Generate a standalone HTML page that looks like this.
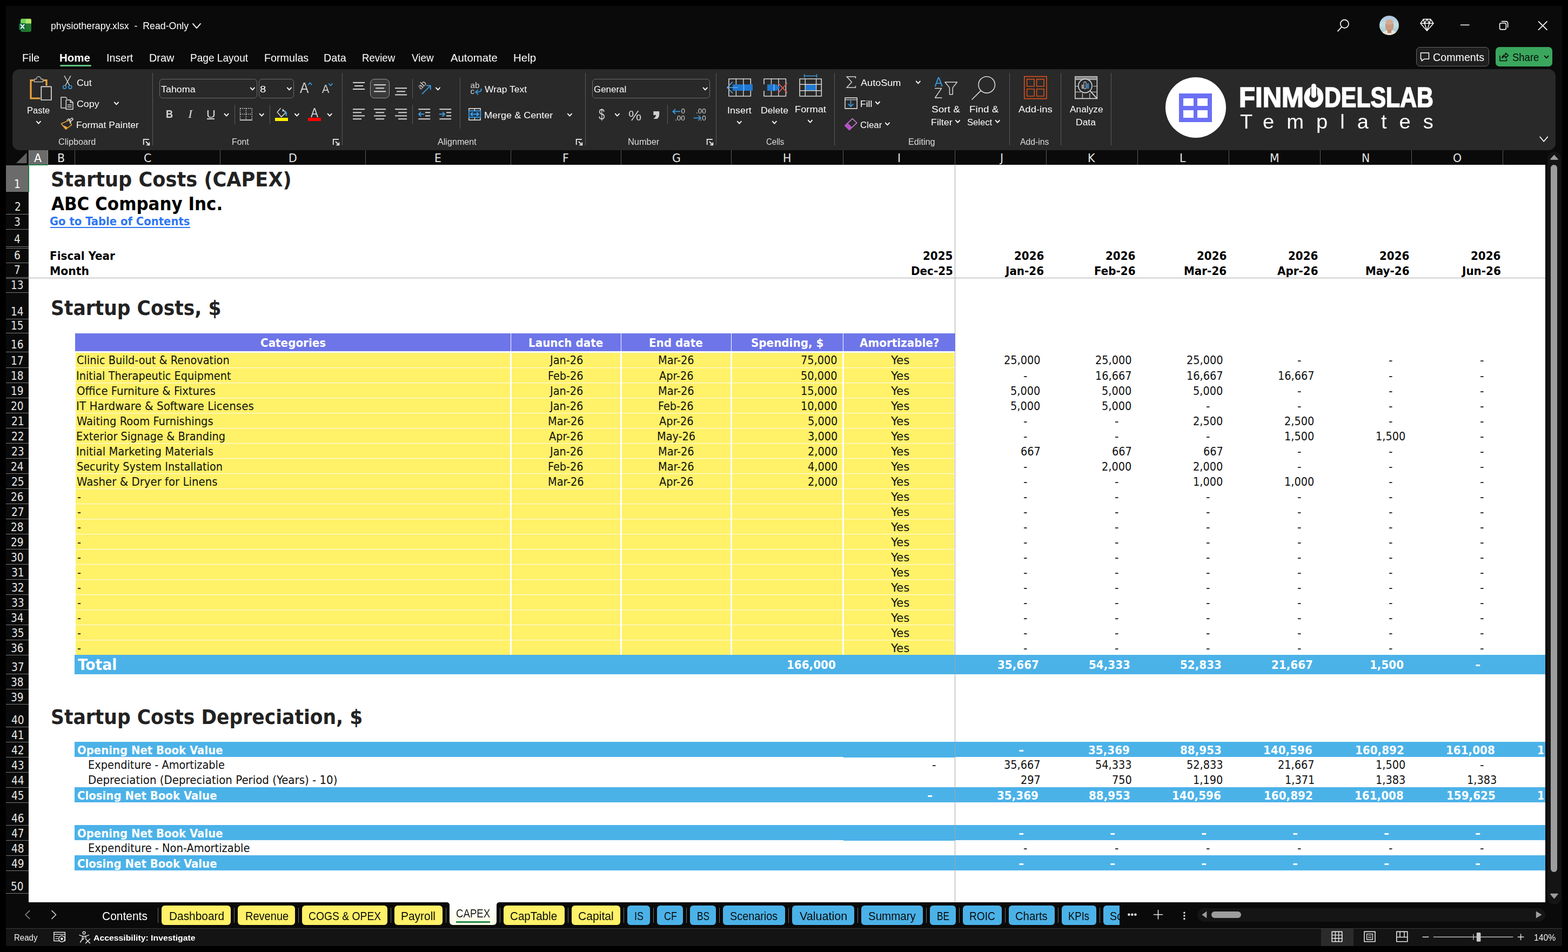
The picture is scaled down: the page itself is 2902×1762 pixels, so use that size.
<!DOCTYPE html>
<html lang="en"><head><meta charset="utf-8"><title>physiotherapy.xlsx - Excel</title>
<style>
html,body{margin:0;padding:0;background:#000;}
body{width:2902px;height:1762px;position:relative;overflow:hidden;font-family:"Liberation Sans",sans-serif;}
#win{position:absolute;left:11px;top:11px;width:2880px;height:1740px;background:#0a0a0a;}
i,span,svg,b{position:absolute;display:block;}
b{font-weight:400;}
#chrome{position:absolute;left:0;top:0;width:2902px;height:1762px;will-change:transform;}
span{white-space:pre;transform-origin:0 0;color:#fff;}
.u{font-family:"Liberation Sans",sans-serif;}
.ub{font-family:"Liberation Sans",sans-serif;font-weight:700;}
.ui{font-family:"Liberation Serif",serif;font-style:italic;}
.h{font-family:"DejaVu Sans Condensed","DejaVu Sans",sans-serif;}
.hb{font-family:"DejaVu Sans Condensed","DejaVu Sans",sans-serif;font-weight:700;}
.dv{font-family:"DejaVu Sans",sans-serif;}
</style></head><body>
<div id="win"></div>
<!-- sheet -->
<i style="left:53px;top:305px;width:2807px;height:1365px;background:#fff;"></i>
<i style="left:11px;top:278px;width:2849px;height:27px;background:#0a0a0a;"></i>
<i style="left:54px;top:278px;width:34px;height:26px;background:#6b6b6b;"></i>
<svg style="left:29px;top:282px" width="22" height="21" viewBox="0 0 22 21"><path d="M20.5 0.5V20H1Z" fill="#5f5f5f"/></svg>
<i style="left:88px;top:278px;width:1px;height:27px;background:#9a9a9a;"></i>
<i style="left:138px;top:278px;width:1px;height:27px;background:#5c5c5c;"></i>
<i style="left:407px;top:278px;width:1px;height:27px;background:#5c5c5c;"></i>
<i style="left:676px;top:278px;width:1px;height:27px;background:#5c5c5c;"></i>
<i style="left:945px;top:278px;width:1px;height:27px;background:#5c5c5c;"></i>
<i style="left:1149px;top:278px;width:1px;height:27px;background:#5c5c5c;"></i>
<i style="left:1353px;top:278px;width:1px;height:27px;background:#5c5c5c;"></i>
<i style="left:1560px;top:278px;width:1px;height:27px;background:#5c5c5c;"></i>
<i style="left:1767px;top:278px;width:1px;height:27px;background:#5c5c5c;"></i>
<i style="left:1936px;top:278px;width:1px;height:27px;background:#5c5c5c;"></i>
<i style="left:2105px;top:278px;width:1px;height:27px;background:#5c5c5c;"></i>
<i style="left:2274px;top:278px;width:1px;height:27px;background:#5c5c5c;"></i>
<i style="left:2443px;top:278px;width:1px;height:27px;background:#5c5c5c;"></i>
<i style="left:2612px;top:278px;width:1px;height:27px;background:#5c5c5c;"></i>
<i style="left:2781px;top:278px;width:1px;height:27px;background:#5c5c5c;"></i>
<i style="left:53px;top:278px;width:1px;height:26px;background:#8a8a8a;"></i>
<span class="h" style="left:63.49px;top:280.5px;font-size:21px;line-height:24px;transform:scaleX(1.085);color:#fff;">A</span>
<span class="h" style="left:106.2px;top:280.5px;font-size:21px;line-height:24px;transform:scaleX(1.085);color:#e6e6e6;">B</span>
<span class="h" style="left:265.82px;top:280.5px;font-size:21px;line-height:24px;transform:scaleX(1.085);color:#e6e6e6;">C</span>
<span class="h" style="left:533.73px;top:280.5px;font-size:21px;line-height:24px;transform:scaleX(1.085);color:#e6e6e6;">D</span>
<span class="h" style="left:804.16px;top:280.5px;font-size:21px;line-height:24px;transform:scaleX(1.085);color:#e6e6e6;">E</span>
<span class="h" style="left:1041.17px;top:280.5px;font-size:21px;line-height:24px;transform:scaleX(1.085);color:#e6e6e6;">F</span>
<span class="h" style="left:1243.8px;top:280.5px;font-size:21px;line-height:24px;transform:scaleX(1.085);color:#e6e6e6;">G</span>
<span class="h" style="left:1449.31px;top:280.5px;font-size:21px;line-height:24px;transform:scaleX(1.085);color:#e6e6e6;">H</span>
<span class="h" style="left:1660.98px;top:280.5px;font-size:21px;line-height:24px;transform:scaleX(1.085);color:#e6e6e6;">I</span>
<span class="h" style="left:1850.51px;top:280.5px;font-size:21px;line-height:24px;transform:scaleX(1.085);color:#e6e6e6;">J</span>
<span class="h" style="left:2013.08px;top:280.5px;font-size:21px;line-height:24px;transform:scaleX(1.085);color:#e6e6e6;">K</span>
<span class="h" style="left:2183.33px;top:280.5px;font-size:21px;line-height:24px;transform:scaleX(1.085);color:#e6e6e6;">L</span>
<span class="h" style="left:2350.17px;top:280.5px;font-size:21px;line-height:24px;transform:scaleX(1.085);color:#e6e6e6;">M</span>
<span class="h" style="left:2520.36px;top:280.5px;font-size:21px;line-height:24px;transform:scaleX(1.085);color:#e6e6e6;">N</span>
<span class="h" style="left:2688.91px;top:280.5px;font-size:21px;line-height:24px;transform:scaleX(1.085);color:#e6e6e6;">O</span>
<i style="left:11px;top:305px;width:42px;height:1365px;background:#0a0a0a;"></i>
<i style="left:11px;top:306px;width:41px;height:48px;background:#6b6b6b;"></i>
<i style="left:11px;top:354px;width:42px;height:1px;background:#7a7a7a;"></i>
<span class="h" style="left:26.24px;top:329px;font-size:21px;line-height:24px;transform:scaleX(0.985);color:#fff;">1</span>
<i style="left:11px;top:396px;width:42px;height:1px;background:#7a7a7a;"></i>
<span class="h" style="left:26.6px;top:371px;font-size:21px;line-height:24px;transform:scaleX(0.985);color:#e6e6e6;">2</span>
<i style="left:11px;top:424px;width:42px;height:1px;background:#7a7a7a;"></i>
<span class="h" style="left:26.4px;top:399px;font-size:21px;line-height:24px;transform:scaleX(0.985);color:#e6e6e6;">3</span>
<i style="left:11px;top:456px;width:42px;height:1px;background:#7a7a7a;"></i>
<i style="left:11px;top:459px;width:42px;height:1px;background:#7a7a7a;"></i>
<span class="h" style="left:26.45px;top:431px;font-size:21px;line-height:24px;transform:scaleX(0.985);color:#e6e6e6;">4</span>
<i style="left:11px;top:486px;width:42px;height:1px;background:#7a7a7a;"></i>
<span class="h" style="left:26.29px;top:461px;font-size:21px;line-height:24px;transform:scaleX(0.985);color:#e6e6e6;">6</span>
<i style="left:11px;top:513px;width:42px;height:1px;background:#7a7a7a;"></i>
<i style="left:11px;top:515px;width:42px;height:1px;background:#7a7a7a;"></i>
<span class="h" style="left:26.4px;top:488px;font-size:21px;line-height:24px;transform:scaleX(0.985);color:#e6e6e6;">7</span>
<i style="left:11px;top:541px;width:42px;height:1px;background:#7a7a7a;"></i>
<span class="h" style="left:20.19px;top:516px;font-size:21px;line-height:24px;transform:scaleX(0.985);color:#e6e6e6;">13</span>
<i style="left:11px;top:590px;width:42px;height:1px;background:#7a7a7a;"></i>
<span class="h" style="left:19.99px;top:565px;font-size:21px;line-height:24px;transform:scaleX(0.985);color:#e6e6e6;">14</span>
<i style="left:11px;top:616px;width:42px;height:1px;background:#7a7a7a;"></i>
<span class="h" style="left:20.3px;top:591px;font-size:21px;line-height:24px;transform:scaleX(0.985);color:#e6e6e6;">15</span>
<i style="left:11px;top:651px;width:42px;height:1px;background:#7a7a7a;"></i>
<span class="h" style="left:20.04px;top:626px;font-size:21px;line-height:24px;transform:scaleX(0.985);color:#e6e6e6;">16</span>
<i style="left:11px;top:680px;width:42px;height:1px;background:#7a7a7a;"></i>
<span class="h" style="left:20.25px;top:655.7px;font-size:21px;line-height:24px;transform:scaleX(0.985);color:#e6e6e6;">17</span>
<i style="left:11px;top:708px;width:42px;height:1px;background:#7a7a7a;"></i>
<span class="h" style="left:20.09px;top:683.7px;font-size:21px;line-height:24px;transform:scaleX(0.985);color:#e6e6e6;">18</span>
<i style="left:11px;top:736px;width:42px;height:1px;background:#7a7a7a;"></i>
<span class="h" style="left:20.14px;top:711.7px;font-size:21px;line-height:24px;transform:scaleX(0.985);color:#e6e6e6;">19</span>
<i style="left:11px;top:764px;width:42px;height:1px;background:#7a7a7a;"></i>
<span class="h" style="left:20.4px;top:739.7px;font-size:21px;line-height:24px;transform:scaleX(0.985);color:#e6e6e6;">20</span>
<i style="left:11px;top:792px;width:42px;height:1px;background:#7a7a7a;"></i>
<span class="h" style="left:20.66px;top:767.7px;font-size:21px;line-height:24px;transform:scaleX(0.985);color:#e6e6e6;">21</span>
<i style="left:11px;top:820px;width:42px;height:1px;background:#7a7a7a;"></i>
<span class="h" style="left:20.71px;top:795.7px;font-size:21px;line-height:24px;transform:scaleX(0.985);color:#e6e6e6;">22</span>
<i style="left:11px;top:848px;width:42px;height:1px;background:#7a7a7a;"></i>
<span class="h" style="left:20.5px;top:823.7px;font-size:21px;line-height:24px;transform:scaleX(0.985);color:#e6e6e6;">23</span>
<i style="left:11px;top:876px;width:42px;height:1px;background:#7a7a7a;"></i>
<span class="h" style="left:20.3px;top:851.7px;font-size:21px;line-height:24px;transform:scaleX(0.985);color:#e6e6e6;">24</span>
<i style="left:11px;top:904px;width:42px;height:1px;background:#7a7a7a;"></i>
<span class="h" style="left:20.61px;top:879.7px;font-size:21px;line-height:24px;transform:scaleX(0.985);color:#e6e6e6;">25</span>
<i style="left:11px;top:932px;width:42px;height:1px;background:#7a7a7a;"></i>
<span class="h" style="left:20.35px;top:907.7px;font-size:21px;line-height:24px;transform:scaleX(0.985);color:#e6e6e6;">26</span>
<i style="left:11px;top:960px;width:42px;height:1px;background:#7a7a7a;"></i>
<span class="h" style="left:20.56px;top:935.7px;font-size:21px;line-height:24px;transform:scaleX(0.985);color:#e6e6e6;">27</span>
<i style="left:11px;top:988px;width:42px;height:1px;background:#7a7a7a;"></i>
<span class="h" style="left:20.4px;top:963.7px;font-size:21px;line-height:24px;transform:scaleX(0.985);color:#e6e6e6;">28</span>
<i style="left:11px;top:1016px;width:42px;height:1px;background:#7a7a7a;"></i>
<span class="h" style="left:20.45px;top:991.7px;font-size:21px;line-height:24px;transform:scaleX(0.985);color:#e6e6e6;">29</span>
<i style="left:11px;top:1044px;width:42px;height:1px;background:#7a7a7a;"></i>
<span class="h" style="left:20.4px;top:1019.7px;font-size:21px;line-height:24px;transform:scaleX(0.985);color:#e6e6e6;">30</span>
<i style="left:11px;top:1072px;width:42px;height:1px;background:#7a7a7a;"></i>
<span class="h" style="left:20.66px;top:1047.7px;font-size:21px;line-height:24px;transform:scaleX(0.985);color:#e6e6e6;">31</span>
<i style="left:11px;top:1100px;width:42px;height:1px;background:#7a7a7a;"></i>
<span class="h" style="left:20.71px;top:1075.7px;font-size:21px;line-height:24px;transform:scaleX(0.985);color:#e6e6e6;">32</span>
<i style="left:11px;top:1128px;width:42px;height:1px;background:#7a7a7a;"></i>
<span class="h" style="left:20.5px;top:1103.7px;font-size:21px;line-height:24px;transform:scaleX(0.985);color:#e6e6e6;">33</span>
<i style="left:11px;top:1156px;width:42px;height:1px;background:#7a7a7a;"></i>
<span class="h" style="left:20.3px;top:1131.7px;font-size:21px;line-height:24px;transform:scaleX(0.985);color:#e6e6e6;">34</span>
<i style="left:11px;top:1184px;width:42px;height:1px;background:#7a7a7a;"></i>
<span class="h" style="left:20.61px;top:1159.7px;font-size:21px;line-height:24px;transform:scaleX(0.985);color:#e6e6e6;">35</span>
<i style="left:11px;top:1212px;width:42px;height:1px;background:#7a7a7a;"></i>
<span class="h" style="left:20.35px;top:1187.7px;font-size:21px;line-height:24px;transform:scaleX(0.985);color:#e6e6e6;">36</span>
<i style="left:11px;top:1247px;width:42px;height:1px;background:#7a7a7a;"></i>
<span class="h" style="left:20.56px;top:1222.7px;font-size:21px;line-height:24px;transform:scaleX(0.985);color:#e6e6e6;">37</span>
<i style="left:11px;top:1275px;width:42px;height:1px;background:#7a7a7a;"></i>
<span class="h" style="left:20.4px;top:1250.7px;font-size:21px;line-height:24px;transform:scaleX(0.985);color:#e6e6e6;">38</span>
<i style="left:11px;top:1303px;width:42px;height:1px;background:#7a7a7a;"></i>
<span class="h" style="left:20.45px;top:1278.7px;font-size:21px;line-height:24px;transform:scaleX(0.985);color:#e6e6e6;">39</span>
<i style="left:11px;top:1345px;width:42px;height:1px;background:#7a7a7a;"></i>
<span class="h" style="left:20.66px;top:1320.7px;font-size:21px;line-height:24px;transform:scaleX(0.985);color:#e6e6e6;">40</span>
<i style="left:11px;top:1373px;width:42px;height:1px;background:#7a7a7a;"></i>
<span class="h" style="left:20.92px;top:1348.7px;font-size:21px;line-height:24px;transform:scaleX(0.985);color:#e6e6e6;">41</span>
<i style="left:11px;top:1401px;width:42px;height:1px;background:#7a7a7a;"></i>
<span class="h" style="left:20.97px;top:1376.7px;font-size:21px;line-height:24px;transform:scaleX(0.985);color:#e6e6e6;">42</span>
<i style="left:11px;top:1429px;width:42px;height:1px;background:#7a7a7a;"></i>
<span class="h" style="left:20.76px;top:1404.7px;font-size:21px;line-height:24px;transform:scaleX(0.985);color:#e6e6e6;">43</span>
<i style="left:11px;top:1457px;width:42px;height:1px;background:#7a7a7a;"></i>
<span class="h" style="left:20.56px;top:1432.7px;font-size:21px;line-height:24px;transform:scaleX(0.985);color:#e6e6e6;">44</span>
<i style="left:11px;top:1485px;width:42px;height:1px;background:#7a7a7a;"></i>
<span class="h" style="left:20.87px;top:1460.7px;font-size:21px;line-height:24px;transform:scaleX(0.985);color:#e6e6e6;">45</span>
<i style="left:11px;top:1527px;width:42px;height:1px;background:#7a7a7a;"></i>
<span class="h" style="left:20.61px;top:1502.7px;font-size:21px;line-height:24px;transform:scaleX(0.985);color:#e6e6e6;">46</span>
<i style="left:11px;top:1555px;width:42px;height:1px;background:#7a7a7a;"></i>
<span class="h" style="left:20.81px;top:1530.7px;font-size:21px;line-height:24px;transform:scaleX(0.985);color:#e6e6e6;">47</span>
<i style="left:11px;top:1583px;width:42px;height:1px;background:#7a7a7a;"></i>
<span class="h" style="left:20.66px;top:1558.7px;font-size:21px;line-height:24px;transform:scaleX(0.985);color:#e6e6e6;">48</span>
<i style="left:11px;top:1611px;width:42px;height:1px;background:#7a7a7a;"></i>
<span class="h" style="left:20.71px;top:1586.7px;font-size:21px;line-height:24px;transform:scaleX(0.985);color:#e6e6e6;">49</span>
<i style="left:11px;top:1653px;width:42px;height:1px;background:#7a7a7a;"></i>
<span class="h" style="left:20.4px;top:1628.7px;font-size:21px;line-height:24px;transform:scaleX(0.985);color:#e6e6e6;">50</span>
<i style="left:52px;top:304px;width:37px;height:2px;background:#1e7b45;"></i>
<i style="left:52px;top:304px;width:2px;height:51px;background:#1e7b45;"></i>
<i style="left:139px;top:617px;width:1628px;height:33px;background:#6e75e8;"></i>
<i style="left:945px;top:617px;width:1px;height:33px;background:#fff;"></i>
<i style="left:1149px;top:617px;width:1px;height:33px;background:#fff;"></i>
<i style="left:1353px;top:617px;width:1px;height:33px;background:#fff;"></i>
<i style="left:1560px;top:617px;width:1px;height:33px;background:#fff;"></i>
<i style="left:140px;top:653px;width:1626px;height:559px;background:#fff168;"></i>
<i style="left:140px;top:680px;width:1626px;height:1px;background:#fffbd6;"></i>
<i style="left:140px;top:681px;width:1626px;height:1px;background:#fff38a;"></i>
<i style="left:140px;top:708px;width:1626px;height:1px;background:#fffbd6;"></i>
<i style="left:140px;top:709px;width:1626px;height:1px;background:#fff38a;"></i>
<i style="left:140px;top:736px;width:1626px;height:1px;background:#fffbd6;"></i>
<i style="left:140px;top:737px;width:1626px;height:1px;background:#fff38a;"></i>
<i style="left:140px;top:764px;width:1626px;height:1px;background:#fffbd6;"></i>
<i style="left:140px;top:765px;width:1626px;height:1px;background:#fff38a;"></i>
<i style="left:140px;top:792px;width:1626px;height:1px;background:#fffbd6;"></i>
<i style="left:140px;top:793px;width:1626px;height:1px;background:#fff38a;"></i>
<i style="left:140px;top:820px;width:1626px;height:1px;background:#fffbd6;"></i>
<i style="left:140px;top:821px;width:1626px;height:1px;background:#fff38a;"></i>
<i style="left:140px;top:848px;width:1626px;height:1px;background:#fffbd6;"></i>
<i style="left:140px;top:849px;width:1626px;height:1px;background:#fff38a;"></i>
<i style="left:140px;top:876px;width:1626px;height:1px;background:#fffbd6;"></i>
<i style="left:140px;top:877px;width:1626px;height:1px;background:#fff38a;"></i>
<i style="left:140px;top:904px;width:1626px;height:1px;background:#fffbd6;"></i>
<i style="left:140px;top:905px;width:1626px;height:1px;background:#fff38a;"></i>
<i style="left:140px;top:932px;width:1626px;height:1px;background:#fffbd6;"></i>
<i style="left:140px;top:933px;width:1626px;height:1px;background:#fff38a;"></i>
<i style="left:140px;top:960px;width:1626px;height:1px;background:#fffbd6;"></i>
<i style="left:140px;top:961px;width:1626px;height:1px;background:#fff38a;"></i>
<i style="left:140px;top:988px;width:1626px;height:1px;background:#fffbd6;"></i>
<i style="left:140px;top:989px;width:1626px;height:1px;background:#fff38a;"></i>
<i style="left:140px;top:1016px;width:1626px;height:1px;background:#fffbd6;"></i>
<i style="left:140px;top:1017px;width:1626px;height:1px;background:#fff38a;"></i>
<i style="left:140px;top:1044px;width:1626px;height:1px;background:#fffbd6;"></i>
<i style="left:140px;top:1045px;width:1626px;height:1px;background:#fff38a;"></i>
<i style="left:140px;top:1072px;width:1626px;height:1px;background:#fffbd6;"></i>
<i style="left:140px;top:1073px;width:1626px;height:1px;background:#fff38a;"></i>
<i style="left:140px;top:1100px;width:1626px;height:1px;background:#fffbd6;"></i>
<i style="left:140px;top:1101px;width:1626px;height:1px;background:#fff38a;"></i>
<i style="left:140px;top:1128px;width:1626px;height:1px;background:#fffbd6;"></i>
<i style="left:140px;top:1129px;width:1626px;height:1px;background:#fff38a;"></i>
<i style="left:140px;top:1156px;width:1626px;height:1px;background:#fffbd6;"></i>
<i style="left:140px;top:1157px;width:1626px;height:1px;background:#fff38a;"></i>
<i style="left:140px;top:1184px;width:1626px;height:1px;background:#fffbd6;"></i>
<i style="left:140px;top:1185px;width:1626px;height:1px;background:#fff38a;"></i>
<i style="left:944px;top:650px;width:3px;height:562px;background:#fff;"></i>
<i style="left:1148px;top:650px;width:3px;height:562px;background:#fff;"></i>
<i style="left:1352px;top:650px;width:3px;height:562px;background:#fff;"></i>
<i style="left:1559px;top:650px;width:3px;height:562px;background:#fff;"></i>
<i style="left:138px;top:1212px;width:2722px;height:36px;background:#4bb2e8;"></i>
<i style="left:138px;top:1373px;width:2722px;height:28px;background:#4bb2e8;"></i>
<i style="left:138px;top:1457px;width:2722px;height:28px;background:#4bb2e8;"></i>
<i style="left:138px;top:1527px;width:2722px;height:28px;background:#4bb2e8;"></i>
<i style="left:138px;top:1583px;width:2722px;height:28px;background:#4bb2e8;"></i>
<i style="left:1561px;top:1401px;width:206px;height:1px;background:#4bb2e8;"></i>
<i style="left:1561px;top:1555px;width:206px;height:1px;background:#4bb2e8;"></i>
<i style="left:53px;top:514px;width:2807px;height:1px;background:#a6a6a6;"></i>
<i style="left:1767px;top:305px;width:1px;height:1365px;background:#a6a6a6;"></i>
<i style="left:1766px;top:617px;width:2px;height:33px;background:#6e75e8;"></i>
<span class="hb" style="left:93.85px;top:309.5px;font-size:37.3px;line-height:44px;transform:scaleX(1.0484);color:#222;">Startup Costs (CAPEX)</span>
<span class="hb" style="left:94.6px;top:357.7px;font-size:33px;line-height:39px;transform:scaleX(1.0436);color:#000;">ABC Company Inc.</span>
<span class="hb" style="left:92.43px;top:398.3px;font-size:21px;line-height:24px;transform:scaleX(1.0395);color:#2f76f2;">Go to Table of Contents</span>
<i style="left:93px;top:420px;width:259px;height:2px;background:#2f76f2;"></i>
<span class="hb" style="left:92.02px;top:462.3px;font-size:21px;line-height:24px;transform:scaleX(1.059);color:#000;">Fiscal Year</span>
<span class="hb" style="left:91.99px;top:490.3px;font-size:21px;line-height:24px;transform:scaleX(1.0791);color:#000;">Month</span>
<span class="hb" style="left:93.9px;top:548.3px;font-size:37.3px;line-height:44px;transform:scaleX(1.0294);color:#222;">Startup Costs, $</span>
<span class="hb" style="left:93.9px;top:1305px;font-size:37.3px;line-height:44px;transform:scaleX(1.0297);color:#222;">Startup Costs Depreciation, $</span>
<span class="hb" style="left:1708.12px;top:462.3px;font-size:21px;line-height:24px;transform:scaleX(1.055);color:#000;">2025</span>
<span class="hb" style="left:1685.75px;top:490.3px;font-size:21px;line-height:24px;transform:scaleX(1.055);color:#000;">Dec-25</span>
<span class="hb" style="left:1876.79px;top:462.3px;font-size:21px;line-height:24px;transform:scaleX(1.055);color:#000;">2026</span>
<span class="hb" style="left:1861.29px;top:490.3px;font-size:21px;line-height:24px;transform:scaleX(1.055);color:#000;">Jan-26</span>
<span class="hb" style="left:2045.79px;top:462.3px;font-size:21px;line-height:24px;transform:scaleX(1.055);color:#000;">2026</span>
<span class="hb" style="left:2024.74px;top:490.3px;font-size:21px;line-height:24px;transform:scaleX(1.055);color:#000;">Feb-26</span>
<span class="hb" style="left:2214.79px;top:462.3px;font-size:21px;line-height:24px;transform:scaleX(1.055);color:#000;">2026</span>
<span class="hb" style="left:2191.2px;top:490.3px;font-size:21px;line-height:24px;transform:scaleX(1.055);color:#000;">Mar-26</span>
<span class="hb" style="left:2383.79px;top:462.3px;font-size:21px;line-height:24px;transform:scaleX(1.055);color:#000;">2026</span>
<span class="hb" style="left:2363.74px;top:490.3px;font-size:21px;line-height:24px;transform:scaleX(1.055);color:#000;">Apr-26</span>
<span class="hb" style="left:2552.79px;top:462.3px;font-size:21px;line-height:24px;transform:scaleX(1.055);color:#000;">2026</span>
<span class="hb" style="left:2526.65px;top:490.3px;font-size:21px;line-height:24px;transform:scaleX(1.055);color:#000;">May-26</span>
<span class="hb" style="left:2721.79px;top:462.3px;font-size:21px;line-height:24px;transform:scaleX(1.055);color:#000;">2026</span>
<span class="hb" style="left:2705.5px;top:490.3px;font-size:21px;line-height:24px;transform:scaleX(1.055);color:#000;">Jun-26</span>
<span class="hb" style="left:482.06px;top:623.3px;font-size:21px;line-height:24px;transform:scaleX(1.055);color:#fff;">Categories</span>
<span class="hb" style="left:978.23px;top:623.3px;font-size:21px;line-height:24px;transform:scaleX(1.055);color:#fff;">Launch date</span>
<span class="hb" style="left:1201.45px;top:623.3px;font-size:21px;line-height:24px;transform:scaleX(1.055);color:#fff;">End date</span>
<span class="hb" style="left:1390.17px;top:623.3px;font-size:21px;line-height:24px;transform:scaleX(1.055);color:#fff;">Spending, $</span>
<span class="hb" style="left:1591.29px;top:623.3px;font-size:21px;line-height:24px;transform:scaleX(1.055);color:#fff;">Amortizable?</span>
<span class="h" style="left:141.72px;top:655px;font-size:21px;line-height:24px;transform:scaleX(1.0245);color:#111;">Clinic Build-out &amp; Renovation</span>
<span class="h" style="left:1017.93px;top:655px;font-size:21px;line-height:24px;transform:scaleX(1.022);color:#111;">Jan-26</span>
<span class="h" style="left:1217.86px;top:655px;font-size:21px;line-height:24px;transform:scaleX(1.022);color:#111;">Mar-26</span>
<span class="h" style="left:1482.37px;top:655px;font-size:21px;line-height:24px;transform:scaleX(1.022);color:#111;">75,000</span>
<span class="h" style="left:1648.72px;top:655px;font-size:21px;line-height:24px;transform:scaleX(1.1361);color:#111;">Yes</span>
<span class="h" style="left:1857.87px;top:655px;font-size:21px;line-height:24px;transform:scaleX(1.022);color:#111;">25,000</span>
<span class="h" style="left:2026.87px;top:655px;font-size:21px;line-height:24px;transform:scaleX(1.022);color:#111;">25,000</span>
<span class="h" style="left:2195.87px;top:655px;font-size:21px;line-height:24px;transform:scaleX(1.022);color:#111;">25,000</span>
<span class="h" style="left:2400.64px;top:655px;font-size:21px;line-height:24px;transform:scaleX(1.1);color:#111;">-</span>
<span class="h" style="left:2569.64px;top:655px;font-size:21px;line-height:24px;transform:scaleX(1.1);color:#111;">-</span>
<span class="h" style="left:2738.64px;top:655px;font-size:21px;line-height:24px;transform:scaleX(1.1);color:#111;">-</span>
<span class="h" style="left:140.97px;top:684px;font-size:21px;line-height:24px;transform:scaleX(1.0233);color:#111;">Initial Therapeutic Equipment</span>
<span class="h" style="left:1014.34px;top:684px;font-size:21px;line-height:24px;transform:scaleX(1.022);color:#111;">Feb-26</span>
<span class="h" style="left:1220.21px;top:684px;font-size:21px;line-height:24px;transform:scaleX(1.022);color:#111;">Apr-26</span>
<span class="h" style="left:1482.37px;top:684px;font-size:21px;line-height:24px;transform:scaleX(1.022);color:#111;">50,000</span>
<span class="h" style="left:1648.72px;top:684px;font-size:21px;line-height:24px;transform:scaleX(1.1361);color:#111;">Yes</span>
<span class="h" style="left:1893.64px;top:684px;font-size:21px;line-height:24px;transform:scaleX(1.1);color:#111;">-</span>
<span class="h" style="left:2027.2px;top:684px;font-size:21px;line-height:24px;transform:scaleX(1.022);color:#111;">16,667</span>
<span class="h" style="left:2196.2px;top:684px;font-size:21px;line-height:24px;transform:scaleX(1.022);color:#111;">16,667</span>
<span class="h" style="left:2365.2px;top:684px;font-size:21px;line-height:24px;transform:scaleX(1.022);color:#111;">16,667</span>
<span class="h" style="left:2569.64px;top:684px;font-size:21px;line-height:24px;transform:scaleX(1.1);color:#111;">-</span>
<span class="h" style="left:2738.64px;top:684px;font-size:21px;line-height:24px;transform:scaleX(1.1);color:#111;">-</span>
<span class="h" style="left:141.7px;top:712px;font-size:21px;line-height:24px;transform:scaleX(1.0432);color:#111;">Office Furniture &amp; Fixtures</span>
<span class="h" style="left:1017.93px;top:712px;font-size:21px;line-height:24px;transform:scaleX(1.022);color:#111;">Jan-26</span>
<span class="h" style="left:1217.86px;top:712px;font-size:21px;line-height:24px;transform:scaleX(1.022);color:#111;">Mar-26</span>
<span class="h" style="left:1482.37px;top:712px;font-size:21px;line-height:24px;transform:scaleX(1.022);color:#111;">15,000</span>
<span class="h" style="left:1648.72px;top:712px;font-size:21px;line-height:24px;transform:scaleX(1.1361);color:#111;">Yes</span>
<span class="h" style="left:1870.21px;top:712px;font-size:21px;line-height:24px;transform:scaleX(1.022);color:#111;">5,000</span>
<span class="h" style="left:2039.21px;top:712px;font-size:21px;line-height:24px;transform:scaleX(1.022);color:#111;">5,000</span>
<span class="h" style="left:2208.21px;top:712px;font-size:21px;line-height:24px;transform:scaleX(1.022);color:#111;">5,000</span>
<span class="h" style="left:2400.64px;top:712px;font-size:21px;line-height:24px;transform:scaleX(1.1);color:#111;">-</span>
<span class="h" style="left:2569.64px;top:712px;font-size:21px;line-height:24px;transform:scaleX(1.1);color:#111;">-</span>
<span class="h" style="left:2738.64px;top:712px;font-size:21px;line-height:24px;transform:scaleX(1.1);color:#111;">-</span>
<span class="h" style="left:140.91px;top:740px;font-size:21px;line-height:24px;transform:scaleX(1.0567);color:#111;">IT Hardware &amp; Software Licenses</span>
<span class="h" style="left:1017.93px;top:740px;font-size:21px;line-height:24px;transform:scaleX(1.022);color:#111;">Jan-26</span>
<span class="h" style="left:1218.34px;top:740px;font-size:21px;line-height:24px;transform:scaleX(1.022);color:#111;">Feb-26</span>
<span class="h" style="left:1482.37px;top:740px;font-size:21px;line-height:24px;transform:scaleX(1.022);color:#111;">10,000</span>
<span class="h" style="left:1648.72px;top:740px;font-size:21px;line-height:24px;transform:scaleX(1.1361);color:#111;">Yes</span>
<span class="h" style="left:1870.21px;top:740px;font-size:21px;line-height:24px;transform:scaleX(1.022);color:#111;">5,000</span>
<span class="h" style="left:2039.21px;top:740px;font-size:21px;line-height:24px;transform:scaleX(1.022);color:#111;">5,000</span>
<span class="h" style="left:2231.64px;top:740px;font-size:21px;line-height:24px;transform:scaleX(1.1);color:#111;">-</span>
<span class="h" style="left:2400.64px;top:740px;font-size:21px;line-height:24px;transform:scaleX(1.1);color:#111;">-</span>
<span class="h" style="left:2569.64px;top:740px;font-size:21px;line-height:24px;transform:scaleX(1.1);color:#111;">-</span>
<span class="h" style="left:2738.64px;top:740px;font-size:21px;line-height:24px;transform:scaleX(1.1);color:#111;">-</span>
<span class="h" style="left:142.26px;top:768px;font-size:21px;line-height:24px;transform:scaleX(1.037);color:#111;">Waiting Room Furnishings</span>
<span class="h" style="left:1013.86px;top:768px;font-size:21px;line-height:24px;transform:scaleX(1.022);color:#111;">Mar-26</span>
<span class="h" style="left:1220.21px;top:768px;font-size:21px;line-height:24px;transform:scaleX(1.022);color:#111;">Apr-26</span>
<span class="h" style="left:1494.71px;top:768px;font-size:21px;line-height:24px;transform:scaleX(1.022);color:#111;">5,000</span>
<span class="h" style="left:1648.72px;top:768px;font-size:21px;line-height:24px;transform:scaleX(1.1361);color:#111;">Yes</span>
<span class="h" style="left:1893.64px;top:768px;font-size:21px;line-height:24px;transform:scaleX(1.1);color:#111;">-</span>
<span class="h" style="left:2062.64px;top:768px;font-size:21px;line-height:24px;transform:scaleX(1.1);color:#111;">-</span>
<span class="h" style="left:2208.21px;top:768px;font-size:21px;line-height:24px;transform:scaleX(1.022);color:#111;">2,500</span>
<span class="h" style="left:2377.21px;top:768px;font-size:21px;line-height:24px;transform:scaleX(1.022);color:#111;">2,500</span>
<span class="h" style="left:2569.64px;top:768px;font-size:21px;line-height:24px;transform:scaleX(1.1);color:#111;">-</span>
<span class="h" style="left:2738.64px;top:768px;font-size:21px;line-height:24px;transform:scaleX(1.1);color:#111;">-</span>
<span class="h" style="left:140.97px;top:796px;font-size:21px;line-height:24px;transform:scaleX(1.0262);color:#111;">Exterior Signage &amp; Branding</span>
<span class="h" style="left:1016.21px;top:796px;font-size:21px;line-height:24px;transform:scaleX(1.022);color:#111;">Apr-26</span>
<span class="h" style="left:1215.6px;top:796px;font-size:21px;line-height:24px;transform:scaleX(1.022);color:#111;">May-26</span>
<span class="h" style="left:1494.71px;top:796px;font-size:21px;line-height:24px;transform:scaleX(1.022);color:#111;">3,000</span>
<span class="h" style="left:1648.72px;top:796px;font-size:21px;line-height:24px;transform:scaleX(1.1361);color:#111;">Yes</span>
<span class="h" style="left:1893.64px;top:796px;font-size:21px;line-height:24px;transform:scaleX(1.1);color:#111;">-</span>
<span class="h" style="left:2062.64px;top:796px;font-size:21px;line-height:24px;transform:scaleX(1.1);color:#111;">-</span>
<span class="h" style="left:2231.64px;top:796px;font-size:21px;line-height:24px;transform:scaleX(1.1);color:#111;">-</span>
<span class="h" style="left:2377.21px;top:796px;font-size:21px;line-height:24px;transform:scaleX(1.022);color:#111;">1,500</span>
<span class="h" style="left:2546.21px;top:796px;font-size:21px;line-height:24px;transform:scaleX(1.022);color:#111;">1,500</span>
<span class="h" style="left:2738.64px;top:796px;font-size:21px;line-height:24px;transform:scaleX(1.1);color:#111;">-</span>
<span class="h" style="left:140.95px;top:824px;font-size:21px;line-height:24px;transform:scaleX(1.0366);color:#111;">Initial Marketing Materials</span>
<span class="h" style="left:1017.93px;top:824px;font-size:21px;line-height:24px;transform:scaleX(1.022);color:#111;">Jan-26</span>
<span class="h" style="left:1217.86px;top:824px;font-size:21px;line-height:24px;transform:scaleX(1.022);color:#111;">Mar-26</span>
<span class="h" style="left:1494.71px;top:824px;font-size:21px;line-height:24px;transform:scaleX(1.022);color:#111;">2,000</span>
<span class="h" style="left:1648.72px;top:824px;font-size:21px;line-height:24px;transform:scaleX(1.1361);color:#111;">Yes</span>
<span class="h" style="left:1888.89px;top:824px;font-size:21px;line-height:24px;transform:scaleX(1.022);color:#111;">667</span>
<span class="h" style="left:2057.89px;top:824px;font-size:21px;line-height:24px;transform:scaleX(1.022);color:#111;">667</span>
<span class="h" style="left:2226.89px;top:824px;font-size:21px;line-height:24px;transform:scaleX(1.022);color:#111;">667</span>
<span class="h" style="left:2400.64px;top:824px;font-size:21px;line-height:24px;transform:scaleX(1.1);color:#111;">-</span>
<span class="h" style="left:2569.64px;top:824px;font-size:21px;line-height:24px;transform:scaleX(1.1);color:#111;">-</span>
<span class="h" style="left:2738.64px;top:824px;font-size:21px;line-height:24px;transform:scaleX(1.1);color:#111;">-</span>
<span class="h" style="left:141.62px;top:852px;font-size:21px;line-height:24px;transform:scaleX(1.0199);color:#111;">Security System Installation</span>
<span class="h" style="left:1014.34px;top:852px;font-size:21px;line-height:24px;transform:scaleX(1.022);color:#111;">Feb-26</span>
<span class="h" style="left:1217.86px;top:852px;font-size:21px;line-height:24px;transform:scaleX(1.022);color:#111;">Mar-26</span>
<span class="h" style="left:1494.71px;top:852px;font-size:21px;line-height:24px;transform:scaleX(1.022);color:#111;">4,000</span>
<span class="h" style="left:1648.72px;top:852px;font-size:21px;line-height:24px;transform:scaleX(1.1361);color:#111;">Yes</span>
<span class="h" style="left:1893.64px;top:852px;font-size:21px;line-height:24px;transform:scaleX(1.1);color:#111;">-</span>
<span class="h" style="left:2039.21px;top:852px;font-size:21px;line-height:24px;transform:scaleX(1.022);color:#111;">2,000</span>
<span class="h" style="left:2208.21px;top:852px;font-size:21px;line-height:24px;transform:scaleX(1.022);color:#111;">2,000</span>
<span class="h" style="left:2400.64px;top:852px;font-size:21px;line-height:24px;transform:scaleX(1.1);color:#111;">-</span>
<span class="h" style="left:2569.64px;top:852px;font-size:21px;line-height:24px;transform:scaleX(1.1);color:#111;">-</span>
<span class="h" style="left:2738.64px;top:852px;font-size:21px;line-height:24px;transform:scaleX(1.1);color:#111;">-</span>
<span class="h" style="left:142.25px;top:880px;font-size:21px;line-height:24px;transform:scaleX(1.0469);color:#111;">Washer &amp; Dryer for Linens</span>
<span class="h" style="left:1013.86px;top:880px;font-size:21px;line-height:24px;transform:scaleX(1.022);color:#111;">Mar-26</span>
<span class="h" style="left:1220.21px;top:880px;font-size:21px;line-height:24px;transform:scaleX(1.022);color:#111;">Apr-26</span>
<span class="h" style="left:1494.71px;top:880px;font-size:21px;line-height:24px;transform:scaleX(1.022);color:#111;">2,000</span>
<span class="h" style="left:1648.72px;top:880px;font-size:21px;line-height:24px;transform:scaleX(1.1361);color:#111;">Yes</span>
<span class="h" style="left:1893.64px;top:880px;font-size:21px;line-height:24px;transform:scaleX(1.1);color:#111;">-</span>
<span class="h" style="left:2062.64px;top:880px;font-size:21px;line-height:24px;transform:scaleX(1.1);color:#111;">-</span>
<span class="h" style="left:2208.21px;top:880px;font-size:21px;line-height:24px;transform:scaleX(1.022);color:#111;">1,000</span>
<span class="h" style="left:2377.21px;top:880px;font-size:21px;line-height:24px;transform:scaleX(1.022);color:#111;">1,000</span>
<span class="h" style="left:2569.64px;top:880px;font-size:21px;line-height:24px;transform:scaleX(1.1);color:#111;">-</span>
<span class="h" style="left:2738.64px;top:880px;font-size:21px;line-height:24px;transform:scaleX(1.1);color:#111;">-</span>
<span class="h" style="left:142.54px;top:908px;font-size:21px;line-height:24px;transform:scaleX(1.022);color:#111;">-</span>
<span class="h" style="left:1648.72px;top:908px;font-size:21px;line-height:24px;transform:scaleX(1.1361);color:#111;">Yes</span>
<span class="h" style="left:1893.64px;top:908px;font-size:21px;line-height:24px;transform:scaleX(1.1);color:#111;">-</span>
<span class="h" style="left:2062.64px;top:908px;font-size:21px;line-height:24px;transform:scaleX(1.1);color:#111;">-</span>
<span class="h" style="left:2231.64px;top:908px;font-size:21px;line-height:24px;transform:scaleX(1.1);color:#111;">-</span>
<span class="h" style="left:2400.64px;top:908px;font-size:21px;line-height:24px;transform:scaleX(1.1);color:#111;">-</span>
<span class="h" style="left:2569.64px;top:908px;font-size:21px;line-height:24px;transform:scaleX(1.1);color:#111;">-</span>
<span class="h" style="left:2738.64px;top:908px;font-size:21px;line-height:24px;transform:scaleX(1.1);color:#111;">-</span>
<span class="h" style="left:142.54px;top:936px;font-size:21px;line-height:24px;transform:scaleX(1.022);color:#111;">-</span>
<span class="h" style="left:1648.72px;top:936px;font-size:21px;line-height:24px;transform:scaleX(1.1361);color:#111;">Yes</span>
<span class="h" style="left:1893.64px;top:936px;font-size:21px;line-height:24px;transform:scaleX(1.1);color:#111;">-</span>
<span class="h" style="left:2062.64px;top:936px;font-size:21px;line-height:24px;transform:scaleX(1.1);color:#111;">-</span>
<span class="h" style="left:2231.64px;top:936px;font-size:21px;line-height:24px;transform:scaleX(1.1);color:#111;">-</span>
<span class="h" style="left:2400.64px;top:936px;font-size:21px;line-height:24px;transform:scaleX(1.1);color:#111;">-</span>
<span class="h" style="left:2569.64px;top:936px;font-size:21px;line-height:24px;transform:scaleX(1.1);color:#111;">-</span>
<span class="h" style="left:2738.64px;top:936px;font-size:21px;line-height:24px;transform:scaleX(1.1);color:#111;">-</span>
<span class="h" style="left:142.54px;top:964px;font-size:21px;line-height:24px;transform:scaleX(1.022);color:#111;">-</span>
<span class="h" style="left:1648.72px;top:964px;font-size:21px;line-height:24px;transform:scaleX(1.1361);color:#111;">Yes</span>
<span class="h" style="left:1893.64px;top:964px;font-size:21px;line-height:24px;transform:scaleX(1.1);color:#111;">-</span>
<span class="h" style="left:2062.64px;top:964px;font-size:21px;line-height:24px;transform:scaleX(1.1);color:#111;">-</span>
<span class="h" style="left:2231.64px;top:964px;font-size:21px;line-height:24px;transform:scaleX(1.1);color:#111;">-</span>
<span class="h" style="left:2400.64px;top:964px;font-size:21px;line-height:24px;transform:scaleX(1.1);color:#111;">-</span>
<span class="h" style="left:2569.64px;top:964px;font-size:21px;line-height:24px;transform:scaleX(1.1);color:#111;">-</span>
<span class="h" style="left:2738.64px;top:964px;font-size:21px;line-height:24px;transform:scaleX(1.1);color:#111;">-</span>
<span class="h" style="left:142.54px;top:992px;font-size:21px;line-height:24px;transform:scaleX(1.022);color:#111;">-</span>
<span class="h" style="left:1648.72px;top:992px;font-size:21px;line-height:24px;transform:scaleX(1.1361);color:#111;">Yes</span>
<span class="h" style="left:1893.64px;top:992px;font-size:21px;line-height:24px;transform:scaleX(1.1);color:#111;">-</span>
<span class="h" style="left:2062.64px;top:992px;font-size:21px;line-height:24px;transform:scaleX(1.1);color:#111;">-</span>
<span class="h" style="left:2231.64px;top:992px;font-size:21px;line-height:24px;transform:scaleX(1.1);color:#111;">-</span>
<span class="h" style="left:2400.64px;top:992px;font-size:21px;line-height:24px;transform:scaleX(1.1);color:#111;">-</span>
<span class="h" style="left:2569.64px;top:992px;font-size:21px;line-height:24px;transform:scaleX(1.1);color:#111;">-</span>
<span class="h" style="left:2738.64px;top:992px;font-size:21px;line-height:24px;transform:scaleX(1.1);color:#111;">-</span>
<span class="h" style="left:142.54px;top:1020px;font-size:21px;line-height:24px;transform:scaleX(1.022);color:#111;">-</span>
<span class="h" style="left:1648.72px;top:1020px;font-size:21px;line-height:24px;transform:scaleX(1.1361);color:#111;">Yes</span>
<span class="h" style="left:1893.64px;top:1020px;font-size:21px;line-height:24px;transform:scaleX(1.1);color:#111;">-</span>
<span class="h" style="left:2062.64px;top:1020px;font-size:21px;line-height:24px;transform:scaleX(1.1);color:#111;">-</span>
<span class="h" style="left:2231.64px;top:1020px;font-size:21px;line-height:24px;transform:scaleX(1.1);color:#111;">-</span>
<span class="h" style="left:2400.64px;top:1020px;font-size:21px;line-height:24px;transform:scaleX(1.1);color:#111;">-</span>
<span class="h" style="left:2569.64px;top:1020px;font-size:21px;line-height:24px;transform:scaleX(1.1);color:#111;">-</span>
<span class="h" style="left:2738.64px;top:1020px;font-size:21px;line-height:24px;transform:scaleX(1.1);color:#111;">-</span>
<span class="h" style="left:142.54px;top:1048px;font-size:21px;line-height:24px;transform:scaleX(1.022);color:#111;">-</span>
<span class="h" style="left:1648.72px;top:1048px;font-size:21px;line-height:24px;transform:scaleX(1.1361);color:#111;">Yes</span>
<span class="h" style="left:1893.64px;top:1048px;font-size:21px;line-height:24px;transform:scaleX(1.1);color:#111;">-</span>
<span class="h" style="left:2062.64px;top:1048px;font-size:21px;line-height:24px;transform:scaleX(1.1);color:#111;">-</span>
<span class="h" style="left:2231.64px;top:1048px;font-size:21px;line-height:24px;transform:scaleX(1.1);color:#111;">-</span>
<span class="h" style="left:2400.64px;top:1048px;font-size:21px;line-height:24px;transform:scaleX(1.1);color:#111;">-</span>
<span class="h" style="left:2569.64px;top:1048px;font-size:21px;line-height:24px;transform:scaleX(1.1);color:#111;">-</span>
<span class="h" style="left:2738.64px;top:1048px;font-size:21px;line-height:24px;transform:scaleX(1.1);color:#111;">-</span>
<span class="h" style="left:142.54px;top:1076px;font-size:21px;line-height:24px;transform:scaleX(1.022);color:#111;">-</span>
<span class="h" style="left:1648.72px;top:1076px;font-size:21px;line-height:24px;transform:scaleX(1.1361);color:#111;">Yes</span>
<span class="h" style="left:1893.64px;top:1076px;font-size:21px;line-height:24px;transform:scaleX(1.1);color:#111;">-</span>
<span class="h" style="left:2062.64px;top:1076px;font-size:21px;line-height:24px;transform:scaleX(1.1);color:#111;">-</span>
<span class="h" style="left:2231.64px;top:1076px;font-size:21px;line-height:24px;transform:scaleX(1.1);color:#111;">-</span>
<span class="h" style="left:2400.64px;top:1076px;font-size:21px;line-height:24px;transform:scaleX(1.1);color:#111;">-</span>
<span class="h" style="left:2569.64px;top:1076px;font-size:21px;line-height:24px;transform:scaleX(1.1);color:#111;">-</span>
<span class="h" style="left:2738.64px;top:1076px;font-size:21px;line-height:24px;transform:scaleX(1.1);color:#111;">-</span>
<span class="h" style="left:142.54px;top:1104px;font-size:21px;line-height:24px;transform:scaleX(1.022);color:#111;">-</span>
<span class="h" style="left:1648.72px;top:1104px;font-size:21px;line-height:24px;transform:scaleX(1.1361);color:#111;">Yes</span>
<span class="h" style="left:1893.64px;top:1104px;font-size:21px;line-height:24px;transform:scaleX(1.1);color:#111;">-</span>
<span class="h" style="left:2062.64px;top:1104px;font-size:21px;line-height:24px;transform:scaleX(1.1);color:#111;">-</span>
<span class="h" style="left:2231.64px;top:1104px;font-size:21px;line-height:24px;transform:scaleX(1.1);color:#111;">-</span>
<span class="h" style="left:2400.64px;top:1104px;font-size:21px;line-height:24px;transform:scaleX(1.1);color:#111;">-</span>
<span class="h" style="left:2569.64px;top:1104px;font-size:21px;line-height:24px;transform:scaleX(1.1);color:#111;">-</span>
<span class="h" style="left:2738.64px;top:1104px;font-size:21px;line-height:24px;transform:scaleX(1.1);color:#111;">-</span>
<span class="h" style="left:142.54px;top:1132px;font-size:21px;line-height:24px;transform:scaleX(1.022);color:#111;">-</span>
<span class="h" style="left:1648.72px;top:1132px;font-size:21px;line-height:24px;transform:scaleX(1.1361);color:#111;">Yes</span>
<span class="h" style="left:1893.64px;top:1132px;font-size:21px;line-height:24px;transform:scaleX(1.1);color:#111;">-</span>
<span class="h" style="left:2062.64px;top:1132px;font-size:21px;line-height:24px;transform:scaleX(1.1);color:#111;">-</span>
<span class="h" style="left:2231.64px;top:1132px;font-size:21px;line-height:24px;transform:scaleX(1.1);color:#111;">-</span>
<span class="h" style="left:2400.64px;top:1132px;font-size:21px;line-height:24px;transform:scaleX(1.1);color:#111;">-</span>
<span class="h" style="left:2569.64px;top:1132px;font-size:21px;line-height:24px;transform:scaleX(1.1);color:#111;">-</span>
<span class="h" style="left:2738.64px;top:1132px;font-size:21px;line-height:24px;transform:scaleX(1.1);color:#111;">-</span>
<span class="h" style="left:142.54px;top:1160px;font-size:21px;line-height:24px;transform:scaleX(1.022);color:#111;">-</span>
<span class="h" style="left:1648.72px;top:1160px;font-size:21px;line-height:24px;transform:scaleX(1.1361);color:#111;">Yes</span>
<span class="h" style="left:1893.64px;top:1160px;font-size:21px;line-height:24px;transform:scaleX(1.1);color:#111;">-</span>
<span class="h" style="left:2062.64px;top:1160px;font-size:21px;line-height:24px;transform:scaleX(1.1);color:#111;">-</span>
<span class="h" style="left:2231.64px;top:1160px;font-size:21px;line-height:24px;transform:scaleX(1.1);color:#111;">-</span>
<span class="h" style="left:2400.64px;top:1160px;font-size:21px;line-height:24px;transform:scaleX(1.1);color:#111;">-</span>
<span class="h" style="left:2569.64px;top:1160px;font-size:21px;line-height:24px;transform:scaleX(1.1);color:#111;">-</span>
<span class="h" style="left:2738.64px;top:1160px;font-size:21px;line-height:24px;transform:scaleX(1.1);color:#111;">-</span>
<span class="h" style="left:142.54px;top:1188px;font-size:21px;line-height:24px;transform:scaleX(1.022);color:#111;">-</span>
<span class="h" style="left:1648.72px;top:1188px;font-size:21px;line-height:24px;transform:scaleX(1.1361);color:#111;">Yes</span>
<span class="h" style="left:1893.64px;top:1188px;font-size:21px;line-height:24px;transform:scaleX(1.1);color:#111;">-</span>
<span class="h" style="left:2062.64px;top:1188px;font-size:21px;line-height:24px;transform:scaleX(1.1);color:#111;">-</span>
<span class="h" style="left:2231.64px;top:1188px;font-size:21px;line-height:24px;transform:scaleX(1.1);color:#111;">-</span>
<span class="h" style="left:2400.64px;top:1188px;font-size:21px;line-height:24px;transform:scaleX(1.1);color:#111;">-</span>
<span class="h" style="left:2569.64px;top:1188px;font-size:21px;line-height:24px;transform:scaleX(1.1);color:#111;">-</span>
<span class="h" style="left:2738.64px;top:1188px;font-size:21px;line-height:24px;transform:scaleX(1.1);color:#111;">-</span>
<span class="hb" style="left:144.2px;top:1214.3px;font-size:28px;line-height:33px;transform:scaleX(1.0562);color:#fff;">Total</span>
<span class="hb" style="left:1455.65px;top:1219px;font-size:21px;line-height:24px;transform:scaleX(1.055);color:#fff;">166,000</span>
<span class="hb" style="left:1845.68px;top:1219px;font-size:21px;line-height:24px;transform:scaleX(1.055);color:#fff;">35,667</span>
<span class="hb" style="left:2014.68px;top:1219px;font-size:21px;line-height:24px;transform:scaleX(1.055);color:#fff;">54,333</span>
<span class="hb" style="left:2183.68px;top:1219px;font-size:21px;line-height:24px;transform:scaleX(1.055);color:#fff;">52,833</span>
<span class="hb" style="left:2352.68px;top:1219px;font-size:21px;line-height:24px;transform:scaleX(1.055);color:#fff;">21,667</span>
<span class="hb" style="left:2534.85px;top:1219px;font-size:21px;line-height:24px;transform:scaleX(1.055);color:#fff;">1,500</span>
<span class="hb" style="left:2730.14px;top:1219px;font-size:21px;line-height:24px;transform:scaleX(1.3);color:#fff;">-</span>
<span class="hb" style="left:142.52px;top:1376.5px;font-size:21px;line-height:24px;transform:scaleX(1.0424);color:#fff;">Opening Net Book Value</span>
<span class="hb" style="left:1885.14px;top:1376.5px;font-size:21px;line-height:24px;transform:scaleX(1.3);color:#fff;">-</span>
<span class="hb" style="left:2014.34px;top:1376.5px;font-size:21px;line-height:24px;transform:scaleX(1.055);color:#fff;">35,369</span>
<span class="hb" style="left:2183.68px;top:1376.5px;font-size:21px;line-height:24px;transform:scaleX(1.055);color:#fff;">88,953</span>
<span class="hb" style="left:2338.27px;top:1376.5px;font-size:21px;line-height:24px;transform:scaleX(1.055);color:#fff;">140,596</span>
<span class="hb" style="left:2507.93px;top:1376.5px;font-size:21px;line-height:24px;transform:scaleX(1.055);color:#fff;">160,892</span>
<span class="hb" style="left:2676.38px;top:1376.5px;font-size:21px;line-height:24px;transform:scaleX(1.055);color:#fff;">161,008</span>
<span class="hb" style="left:2844.78px;top:1376.5px;font-size:21px;line-height:24px;transform:scaleX(1.055);color:#fff;clip-path:inset(0 2px 0 0);">1</span>
<span class="h" style="left:162.67px;top:1404px;font-size:21px;line-height:24px;transform:scaleX(1.0249);color:#111;">Expenditure - Amortizable</span>
<span class="h" style="left:1858.2px;top:1404px;font-size:21px;line-height:24px;transform:scaleX(1.022);color:#111;">35,667</span>
<span class="h" style="left:2027.09px;top:1404px;font-size:21px;line-height:24px;transform:scaleX(1.022);color:#111;">54,333</span>
<span class="h" style="left:2196.09px;top:1404px;font-size:21px;line-height:24px;transform:scaleX(1.022);color:#111;">52,833</span>
<span class="h" style="left:2365.2px;top:1404px;font-size:21px;line-height:24px;transform:scaleX(1.022);color:#111;">21,667</span>
<span class="h" style="left:2546.21px;top:1404px;font-size:21px;line-height:24px;transform:scaleX(1.022);color:#111;">1,500</span>
<span class="h" style="left:2738.64px;top:1404px;font-size:21px;line-height:24px;transform:scaleX(1.1);color:#111;">-</span>
<span class="h" style="left:1724.64px;top:1404px;font-size:21px;line-height:24px;transform:scaleX(1.1);color:#111;">-</span>
<span class="h" style="left:162.63px;top:1432px;font-size:21px;line-height:24px;transform:scaleX(1.0493);color:#111;">Depreciation (Depreciation Period (Years) - 10)</span>
<span class="h" style="left:1888.89px;top:1432px;font-size:21px;line-height:24px;transform:scaleX(1.022);color:#111;">297</span>
<span class="h" style="left:2057.56px;top:1432px;font-size:21px;line-height:24px;transform:scaleX(1.022);color:#111;">750</span>
<span class="h" style="left:2208.21px;top:1432px;font-size:21px;line-height:24px;transform:scaleX(1.022);color:#111;">1,190</span>
<span class="h" style="left:2377.75px;top:1432px;font-size:21px;line-height:24px;transform:scaleX(1.022);color:#111;">1,371</span>
<span class="h" style="left:2546.43px;top:1432px;font-size:21px;line-height:24px;transform:scaleX(1.022);color:#111;">1,383</span>
<span class="h" style="left:2715.43px;top:1432px;font-size:21px;line-height:24px;transform:scaleX(1.022);color:#111;">1,383</span>
<span class="hb" style="left:142.52px;top:1460.5px;font-size:21px;line-height:24px;transform:scaleX(1.0456);color:#fff;">Closing Net Book Value</span>
<span class="hb" style="left:1845.34px;top:1460.5px;font-size:21px;line-height:24px;transform:scaleX(1.055);color:#fff;">35,369</span>
<span class="hb" style="left:2014.68px;top:1460.5px;font-size:21px;line-height:24px;transform:scaleX(1.055);color:#fff;">88,953</span>
<span class="hb" style="left:2169.27px;top:1460.5px;font-size:21px;line-height:24px;transform:scaleX(1.055);color:#fff;">140,596</span>
<span class="hb" style="left:2338.93px;top:1460.5px;font-size:21px;line-height:24px;transform:scaleX(1.055);color:#fff;">160,892</span>
<span class="hb" style="left:2507.38px;top:1460.5px;font-size:21px;line-height:24px;transform:scaleX(1.055);color:#fff;">161,008</span>
<span class="hb" style="left:2676.6px;top:1460.5px;font-size:21px;line-height:24px;transform:scaleX(1.055);color:#fff;">159,625</span>
<span class="hb" style="left:1716.14px;top:1460.5px;font-size:21px;line-height:24px;transform:scaleX(1.3);color:#fff;">-</span>
<span class="hb" style="left:2844.78px;top:1460.5px;font-size:21px;line-height:24px;transform:scaleX(1.055);color:#fff;clip-path:inset(0 2px 0 0);">1</span>
<span class="hb" style="left:142.52px;top:1530.5px;font-size:21px;line-height:24px;transform:scaleX(1.0424);color:#fff;">Opening Net Book Value</span>
<span class="hb" style="left:1885.14px;top:1530.5px;font-size:21px;line-height:24px;transform:scaleX(1.3);color:#fff;">-</span>
<span class="hb" style="left:2054.14px;top:1530.5px;font-size:21px;line-height:24px;transform:scaleX(1.3);color:#fff;">-</span>
<span class="hb" style="left:2223.14px;top:1530.5px;font-size:21px;line-height:24px;transform:scaleX(1.3);color:#fff;">-</span>
<span class="hb" style="left:2392.14px;top:1530.5px;font-size:21px;line-height:24px;transform:scaleX(1.3);color:#fff;">-</span>
<span class="hb" style="left:2561.14px;top:1530.5px;font-size:21px;line-height:24px;transform:scaleX(1.3);color:#fff;">-</span>
<span class="hb" style="left:2730.14px;top:1530.5px;font-size:21px;line-height:24px;transform:scaleX(1.3);color:#fff;">-</span>
<span class="h" style="left:162.66px;top:1558px;font-size:21px;line-height:24px;transform:scaleX(1.0298);color:#111;">Expenditure - Non-Amortizable</span>
<span class="h" style="left:1893.64px;top:1558px;font-size:21px;line-height:24px;transform:scaleX(1.1);color:#111;">-</span>
<span class="h" style="left:2062.64px;top:1558px;font-size:21px;line-height:24px;transform:scaleX(1.1);color:#111;">-</span>
<span class="h" style="left:2231.64px;top:1558px;font-size:21px;line-height:24px;transform:scaleX(1.1);color:#111;">-</span>
<span class="h" style="left:2400.64px;top:1558px;font-size:21px;line-height:24px;transform:scaleX(1.1);color:#111;">-</span>
<span class="h" style="left:2569.64px;top:1558px;font-size:21px;line-height:24px;transform:scaleX(1.1);color:#111;">-</span>
<span class="h" style="left:2738.64px;top:1558px;font-size:21px;line-height:24px;transform:scaleX(1.1);color:#111;">-</span>
<span class="hb" style="left:142.52px;top:1586.5px;font-size:21px;line-height:24px;transform:scaleX(1.0456);color:#fff;">Closing Net Book Value</span>
<span class="hb" style="left:1885.14px;top:1586.5px;font-size:21px;line-height:24px;transform:scaleX(1.3);color:#fff;">-</span>
<span class="hb" style="left:2054.14px;top:1586.5px;font-size:21px;line-height:24px;transform:scaleX(1.3);color:#fff;">-</span>
<span class="hb" style="left:2223.14px;top:1586.5px;font-size:21px;line-height:24px;transform:scaleX(1.3);color:#fff;">-</span>
<span class="hb" style="left:2392.14px;top:1586.5px;font-size:21px;line-height:24px;transform:scaleX(1.3);color:#fff;">-</span>
<span class="hb" style="left:2561.14px;top:1586.5px;font-size:21px;line-height:24px;transform:scaleX(1.3);color:#fff;">-</span>
<span class="hb" style="left:2730.14px;top:1586.5px;font-size:21px;line-height:24px;transform:scaleX(1.3);color:#fff;">-</span>
<div id="chrome">
<!-- title bar -->
<span class="u" style="left:94.34px;top:37.4px;font-size:18.6px;line-height:21px;transform:scaleX(0.9543);color:#fff;">physiotherapy.xlsx  -  Read-Only</span>
<!-- menu -->
<span class="u" style="left:40.6px;top:95px;font-size:20.6px;line-height:23px;transform:scaleX(0.9711);color:#fff;">File</span>
<span class="ub" style="left:110.07px;top:95px;font-size:20.6px;line-height:23px;transform:scaleX(0.9965);color:#fff;">Home</span>
<span class="u" style="left:196.73px;top:95px;font-size:20.6px;line-height:23px;transform:scaleX(0.9569);color:#fff;">Insert</span>
<span class="u" style="left:275.81px;top:95px;font-size:20.6px;line-height:23px;transform:scaleX(0.9646);color:#fff;">Draw</span>
<span class="u" style="left:351.97px;top:95px;font-size:20.6px;line-height:23px;transform:scaleX(0.9255);color:#fff;">Page Layout</span>
<span class="u" style="left:489.42px;top:95px;font-size:20.6px;line-height:23px;transform:scaleX(0.958);color:#fff;">Formulas</span>
<span class="u" style="left:598.62px;top:95px;font-size:20.6px;line-height:23px;transform:scaleX(0.9589);color:#fff;">Data</span>
<span class="u" style="left:669.81px;top:95px;font-size:20.6px;line-height:23px;transform:scaleX(0.9058);color:#fff;">Review</span>
<span class="u" style="left:762.2px;top:95px;font-size:20.6px;line-height:23px;transform:scaleX(0.917);color:#fff;">View</span>
<span class="u" style="left:834.4px;top:95px;font-size:20.6px;line-height:23px;transform:scaleX(0.986);color:#fff;">Automate</span>
<span class="u" style="left:949.66px;top:95px;font-size:20.6px;line-height:23px;transform:scaleX(0.9962);color:#fff;">Help</span>
<i style="left:111px;top:120px;width:58px;height:3px;background:#5fbf80;border-radius:2px;"></i>
<i style="left:2621px;top:87px;width:135px;height:36px;background:#1f1f1f;border:1px solid #666;border-radius:7px;box-sizing:border-box;"></i>
<span class="u" style="left:2651.62px;top:94.9px;font-size:19.4px;line-height:22px;transform:scaleX(1.014);color:#fff;">Comments</span>
<i style="left:2768px;top:87px;width:105px;height:36px;background:#3aa75d;border-radius:7px;"></i>
<span class="u" style="left:2798.87px;top:94.9px;font-size:19.4px;line-height:22px;transform:scaleX(0.9534);color:#0a0a0a;">Share</span>
<!-- ribbon -->
<i style="left:23px;top:128px;width:2856px;height:150px;background:#292929;border-radius:13px;"></i>
<i style="left:282px;top:134.6px;width:1px;height:134.2px;background:#5a5a5a;"></i>
<i style="left:633px;top:134.6px;width:1px;height:134.2px;background:#5a5a5a;"></i>
<i style="left:1083px;top:134.6px;width:1px;height:134.2px;background:#5a5a5a;"></i>
<i style="left:1325px;top:134.6px;width:1px;height:134.2px;background:#5a5a5a;"></i>
<i style="left:1544px;top:134.6px;width:1px;height:134.2px;background:#5a5a5a;"></i>
<i style="left:1868px;top:134.6px;width:1px;height:134.2px;background:#5a5a5a;"></i>
<i style="left:1963px;top:134.6px;width:1px;height:134.2px;background:#5a5a5a;"></i>
<i style="left:2056px;top:134.6px;width:1px;height:134.2px;background:#5a5a5a;"></i>
<i style="left:851px;top:144.4px;width:1px;height:93.7px;background:#5a5a5a;"></i>
<i style="left:434px;top:193.7px;width:1px;height:36.5px;background:#5a5a5a;"></i>
<i style="left:499px;top:193.7px;width:1px;height:36.5px;background:#5a5a5a;"></i>
<i style="left:763px;top:145.6px;width:1px;height:36.5px;background:#5a5a5a;"></i>
<i style="left:763px;top:193.7px;width:1px;height:36.5px;background:#5a5a5a;"></i>
<i style="left:1235px;top:193.7px;width:1px;height:36.5px;background:#5a5a5a;"></i>
<i style="left:295px;top:146px;width:181px;height:36px;background:transparent;border:1px solid #6b6b6b;border-radius:6px;box-sizing:border-box;"></i>
<i style="left:479px;top:146px;width:65px;height:36px;background:transparent;border:1px solid #6b6b6b;border-radius:6px;box-sizing:border-box;"></i>
<i style="left:1096px;top:146px;width:218px;height:36px;background:transparent;border:1px solid #6b6b6b;border-radius:6px;box-sizing:border-box;"></i>
<i style="left:685px;top:146px;width:36px;height:36px;background:#3a3a3a;border:1px solid #9a9a9a;border-radius:8px;box-sizing:border-box;"></i>
<span class="u" style="left:297.94px;top:154.5px;font-size:17.4px;line-height:20px;transform:scaleX(1.0282);">Tahoma</span>
<span class="u" style="left:481.48px;top:154.5px;font-size:17.4px;line-height:20px;transform:scaleX(1.1744);">8</span>
<span class="u" style="left:1098.65px;top:154.5px;font-size:17.4px;line-height:20px;transform:scaleX(0.9747);">General</span>
<span class="u" style="left:50.38px;top:193.9px;font-size:17.4px;line-height:20px;transform:scaleX(0.949);">Paste</span>
<span class="u" style="left:141.61px;top:142.7px;font-size:17.4px;line-height:20px;transform:scaleX(1.0202);">Cut</span>
<span class="u" style="left:141.61px;top:181.6px;font-size:17.4px;line-height:20px;transform:scaleX(1.024);">Copy</span>
<span class="u" style="left:141.3px;top:220.9px;font-size:17.4px;line-height:20px;transform:scaleX(1.0072);">Format Painter</span>
<span class="u" style="left:108.49px;top:252.9px;font-size:16.6px;line-height:19px;transform:scaleX(0.9755);color:#dcdcdc;">Clipboard</span>
<span class="u" style="left:429.43px;top:252.9px;font-size:16.6px;line-height:19px;transform:scaleX(0.9538);color:#dcdcdc;">Font</span>
<span class="u" style="left:810.2px;top:252.9px;font-size:16.6px;line-height:19px;transform:scaleX(0.9734);color:#dcdcdc;">Alignment</span>
<span class="u" style="left:1162.49px;top:252.9px;font-size:16.6px;line-height:19px;transform:scaleX(0.9877);color:#dcdcdc;">Number</span>
<span class="u" style="left:1417.65px;top:253.4px;font-size:16.6px;line-height:19px;transform:scaleX(0.9038);color:#dcdcdc;">Cells</span>
<span class="u" style="left:1681.4px;top:253.4px;font-size:16.6px;line-height:19px;transform:scaleX(0.9756);color:#dcdcdc;">Editing</span>
<span class="u" style="left:1888.3px;top:253.4px;font-size:16.6px;line-height:19px;transform:scaleX(0.9502);color:#dcdcdc;">Add-ins</span>
<span class="ub" style="left:306.62px;top:199.8px;font-size:20px;line-height:22px;transform:scaleX(0.9099);color:#d6d6d6;">B</span>
<span class="ui" style="left:347.52px;top:198.8px;font-size:21px;line-height:24px;transform:scaleX(1.1771);color:#d6d6d6;">I</span>
<span class="u" style="left:381.64px;top:199.6px;font-size:20px;line-height:22px;transform:scaleX(1.1745);color:#d6d6d6;">U</span>
<i style="left:383px;top:219.3px;width:14px;height:1.6px;background:#d6d6d6;"></i>
<span class="u" style="left:554.6px;top:146.6px;font-size:27.5px;line-height:31px;transform:scaleX(0.8968);color:#d0d0d0;">A</span>
<span class="u" style="left:595.9px;top:151.6px;font-size:22.5px;line-height:25px;transform:scaleX(0.8951);color:#d0d0d0;">A</span>
<span class="u" style="left:575.2px;top:194.8px;font-size:24.5px;line-height:27px;transform:scaleX(0.8592);color:#d0d0d0;">A</span>
<i style="left:569.7px;top:218px;width:24.4px;height:6.1px;background:#ff0000;"></i>
<i style="left:508.9px;top:218px;width:24.4px;height:6.1px;background:#ffee00;"></i>
<span class="u" style="left:897.2px;top:154.5px;font-size:17.4px;line-height:20px;transform:scaleX(1.0055);">Wrap Text</span>
<span class="u" style="left:896.06px;top:202.6px;font-size:17.4px;line-height:20px;transform:scaleX(1.0377);">Merge &amp; Center</span>
<span class="u" style="left:1107.6px;top:196.6px;font-size:27px;line-height:30px;transform:scaleX(0.7538);color:#d0d0d0;">$</span>
<span class="u" style="left:1162.84px;top:199.6px;font-size:25.5px;line-height:28px;transform:scaleX(1.0705);color:#d0d0d0;">%</span>
<span class="ub" style="left:1204.12px;top:171px;font-size:46px;line-height:52px;transform:scaleX(1.6662);color:#d0d0d0;">,</span>
<span class="u" style="left:1346.19px;top:193.9px;font-size:17.4px;line-height:20px;transform:scaleX(1.0306);">Insert</span>
<span class="u" style="left:1408.49px;top:193.9px;font-size:17.4px;line-height:20px;transform:scaleX(1.0149);">Delete</span>
<span class="u" style="left:1471.34px;top:191.7px;font-size:17.4px;line-height:20px;transform:scaleX(1.0513);">Format</span>
<span class="u" style="left:1593.3px;top:142.7px;font-size:17.4px;line-height:20px;transform:scaleX(1.0406);">AutoSum</span>
<span class="u" style="left:1592.2px;top:181.6px;font-size:17.4px;line-height:20px;transform:scaleX(1.003);">Fill</span>
<span class="u" style="left:1592.46px;top:220.9px;font-size:17.4px;line-height:20px;transform:scaleX(0.9694);">Clear</span>
<span class="u" style="left:1724.24px;top:191.7px;font-size:17.4px;line-height:20px;transform:scaleX(1.093);">Sort &amp;</span>
<span class="u" style="left:1723.37px;top:215.7px;font-size:17.4px;line-height:20px;transform:scaleX(1.0256);">Filter</span>
<span class="u" style="left:1794px;top:191.7px;font-size:17.4px;line-height:20px;transform:scaleX(1.0802);">Find &amp;</span>
<span class="u" style="left:1789.75px;top:215.7px;font-size:17.4px;line-height:20px;transform:scaleX(0.9561);">Select</span>
<span class="u" style="left:1885.2px;top:191.7px;font-size:17.4px;line-height:20px;transform:scaleX(1.0643);">Add-ins</span>
<span class="u" style="left:1980.2px;top:191.7px;font-size:17.4px;line-height:20px;transform:scaleX(0.9962);">Analyze</span>
<span class="u" style="left:1991.3px;top:215.7px;font-size:17.4px;line-height:20px;transform:scaleX(1.006);">Data</span>
<!-- logo -->
<i style="left:2156.5px;top:142.5px;width:112px;height:112px;background:#fff;border-radius:50%;"></i>
<i style="left:2182px;top:173px;width:61.2px;height:53px;background:#6b6ff5;"></i>
<i style="left:2190px;top:181.5px;width:19px;height:14.3px;background:#fff;"></i>
<i style="left:2190px;top:203.5px;width:19px;height:14.3px;background:#fff;"></i>
<i style="left:2216.2px;top:181.5px;width:19px;height:14.3px;background:#fff;"></i>
<i style="left:2216.2px;top:203.5px;width:19px;height:14.3px;background:#fff;"></i>
<span class="ub" style="left:0;top:150.6px;font-size:51.4px;line-height:58px;-webkit-text-stroke:1.7px #fff;"><span style="left:2292.56px;top:0;transform:scaleX(0.9557)">FINM</span><span style="left:2412.83px;top:0;transform:scaleX(0.9337)">O</span><span style="left:2450.97px;top:0;transform:scaleX(0.8319)">DELSLAB</span></span>
<span class="u" style="left:2294.54px;top:204.5px;font-size:36.6px;line-height:41px;transform:scaleX(1.0443);color:#fff;letter-spacing:22px;">Templates</span>
<!-- tabs -->
<i style="left:11px;top:1670px;width:2880px;height:48px;background:#0a0a0a;"></i>
<i style="left:820px;top:1669px;width:112px;height:8px;background:#fff;"></i>
<i style="left:820px;top:1670px;width:12px;height:8px;background:#0a0a0a;border-radius:0 5px 0 0;"></i>
<i style="left:919.4px;top:1670px;width:12.6px;height:8px;background:#0a0a0a;border-radius:5px 0 0 0;"></i>
<i style="left:11px;top:1718px;width:2880px;height:1px;background:#3a3a3a;"></i>
<i style="left:11px;top:1719px;width:2880px;height:32px;background:#141414;"></i>
<span class="u" style="left:189.25px;top:1683.6px;font-size:21.2px;line-height:23px;transform:scaleX(0.9896);color:#fff;">Contents</span>
<i style="left:298.9px;top:1676.2px;width:128.2px;height:36px;background:#fff168;border-radius:6px;"></i>
<span class="u" style="left:312.63px;top:1683.6px;font-size:21.2px;line-height:23px;transform:scaleX(0.9847);color:#0c0c0c;">Dashboard</span>
<i style="left:440.2px;top:1676.2px;width:105.5px;height:36px;background:#fff168;border-radius:6px;"></i>
<span class="u" style="left:453.6px;top:1683.6px;font-size:21.2px;line-height:23px;transform:scaleX(0.9452);color:#0c0c0c;">Revenue</span>
<i style="left:559.3px;top:1676.2px;width:157.7px;height:36px;background:#fff168;border-radius:6px;"></i>
<span class="u" style="left:571.03px;top:1683.6px;font-size:21.2px;line-height:23px;transform:scaleX(0.9123);color:#0c0c0c;">COGS &amp; OPEX</span>
<i style="left:730.2px;top:1676.2px;width:88.6px;height:36px;background:#fff168;border-radius:6px;"></i>
<span class="u" style="left:742.32px;top:1683.6px;font-size:21.2px;line-height:23px;transform:scaleX(0.9877);color:#0c0c0c;">Payroll</span>
<i style="left:931.9px;top:1676.2px;width:113.1px;height:36px;background:#fff168;border-radius:6px;"></i>
<span class="u" style="left:944.47px;top:1683.6px;font-size:21.2px;line-height:23px;transform:scaleX(0.9735);color:#0c0c0c;">CapTable</span>
<i style="left:1058px;top:1676.2px;width:90px;height:36px;background:#fff168;border-radius:6px;"></i>
<span class="u" style="left:1070.34px;top:1683.6px;font-size:21.2px;line-height:23px;transform:scaleX(0.9959);color:#0c0c0c;">Capital</span>
<i style="left:1161px;top:1676.2px;width:41.8px;height:36px;background:#4bb2e8;border-radius:6px;"></i>
<span class="u" style="left:1173.69px;top:1683.6px;font-size:21.2px;line-height:23px;transform:scaleX(0.845);color:#0c0c0c;">IS</span>
<i style="left:1215.8px;top:1676.2px;width:48.3px;height:36px;background:#4bb2e8;border-radius:6px;"></i>
<span class="u" style="left:1228.5px;top:1683.6px;font-size:21.2px;line-height:23px;transform:scaleX(0.849);color:#0c0c0c;">CF</span>
<i style="left:1276.7px;top:1676.2px;width:48.3px;height:36px;background:#4bb2e8;border-radius:6px;"></i>
<span class="u" style="left:1289.92px;top:1683.6px;font-size:21.2px;line-height:23px;transform:scaleX(0.8153);color:#0c0c0c;">BS</span>
<i style="left:1338px;top:1676.2px;width:114.9px;height:36px;background:#4bb2e8;border-radius:6px;"></i>
<span class="u" style="left:1350.91px;top:1683.6px;font-size:21.2px;line-height:23px;transform:scaleX(0.9353);color:#0c0c0c;">Scenarios</span>
<i style="left:1466.1px;top:1676.2px;width:114.9px;height:36px;background:#4bb2e8;border-radius:6px;"></i>
<span class="u" style="left:1479.7px;top:1683.6px;font-size:21.2px;line-height:23px;transform:scaleX(1.0165);color:#0c0c0c;">Valuation</span>
<i style="left:1594px;top:1676.2px;width:113.8px;height:36px;background:#4bb2e8;border-radius:6px;"></i>
<span class="u" style="left:1607.18px;top:1683.6px;font-size:21.2px;line-height:23px;transform:scaleX(0.9684);color:#0c0c0c;">Summary</span>
<i style="left:1721px;top:1676.2px;width:48px;height:36px;background:#4bb2e8;border-radius:6px;"></i>
<span class="u" style="left:1734.02px;top:1683.6px;font-size:21.2px;line-height:23px;transform:scaleX(0.8153);color:#0c0c0c;">BE</span>
<i style="left:1782px;top:1676.2px;width:72.1px;height:36px;background:#4bb2e8;border-radius:6px;"></i>
<span class="u" style="left:1794.27px;top:1683.6px;font-size:21.2px;line-height:23px;transform:scaleX(0.9044);color:#0c0c0c;">ROIC</span>
<i style="left:1866.9px;top:1676.2px;width:85.2px;height:36px;background:#4bb2e8;border-radius:6px;"></i>
<span class="u" style="left:1879.39px;top:1683.6px;font-size:21.2px;line-height:23px;transform:scaleX(0.9555);color:#0c0c0c;">Charts</span>
<i style="left:1965.1px;top:1676.2px;width:63.9px;height:36px;background:#4bb2e8;border-radius:6px;"></i>
<span class="u" style="left:1977.42px;top:1683.6px;font-size:21.2px;line-height:23px;transform:scaleX(0.8729);color:#0c0c0c;">KPIs</span>
<i style="left:2042px;top:1676.2px;width:30.2px;height:36px;background:#4bb2e8;border-radius:6px 0 0 6px;"></i>
<b style="left:2042px;top:1676px;width:30.2px;height:37px;overflow:hidden">
<span class="u" style="left:11.51px;top:7.6px;font-size:21.2px;line-height:23px;transform:scaleX(0.93);color:#0c0c0c;">Sc</span>
</b>
<i style="left:291.9px;top:1680px;width:1px;height:28px;background:#6a6a6a;"></i>
<i style="left:432.9px;top:1680px;width:1px;height:28px;background:#6a6a6a;"></i>
<i style="left:552.1px;top:1680px;width:1px;height:28px;background:#6a6a6a;"></i>
<i style="left:723px;top:1680px;width:1px;height:28px;background:#6a6a6a;"></i>
<i style="left:825px;top:1680px;width:1px;height:28px;background:#6a6a6a;"></i>
<i style="left:924.8px;top:1680px;width:1px;height:28px;background:#6a6a6a;"></i>
<i style="left:1051.2px;top:1680px;width:1px;height:28px;background:#6a6a6a;"></i>
<i style="left:1153.9px;top:1680px;width:1px;height:28px;background:#6a6a6a;"></i>
<i style="left:1208.8px;top:1680px;width:1px;height:28px;background:#6a6a6a;"></i>
<i style="left:1270.1px;top:1680px;width:1px;height:28px;background:#6a6a6a;"></i>
<i style="left:1331px;top:1680px;width:1px;height:28px;background:#6a6a6a;"></i>
<i style="left:1459.1px;top:1680px;width:1px;height:28px;background:#6a6a6a;"></i>
<i style="left:1587px;top:1680px;width:1px;height:28px;background:#6a6a6a;"></i>
<i style="left:1714px;top:1680px;width:1px;height:28px;background:#6a6a6a;"></i>
<i style="left:1775.1px;top:1680px;width:1px;height:28px;background:#6a6a6a;"></i>
<i style="left:1860.1px;top:1680px;width:1px;height:28px;background:#6a6a6a;"></i>
<i style="left:1958.1px;top:1680px;width:1px;height:28px;background:#6a6a6a;"></i>
<i style="left:2034.8px;top:1680px;width:1px;height:28px;background:#6a6a6a;"></i>
<i style="left:832px;top:1669px;width:87.4px;height:43px;background:linear-gradient(#fff 20%,#fffbe2);border-radius:0 0 6px 6px;"></i>
<span class="u" style="left:843.87px;top:1679px;font-size:21.2px;line-height:23px;transform:scaleX(0.8799);color:#1a1a1a;">CAPEX</span>
<i style="left:844.2px;top:1705px;width:62.8px;height:3px;background:#1e8a48;"></i>
<span class="u" style="left:26.2px;top:1726.8px;font-size:15.6px;line-height:17px;transform:scaleX(0.963);color:#f0f0f0;">Ready</span>
<span class="ub" style="left:172.71px;top:1726.8px;font-size:15.4px;line-height:17px;transform:scaleX(1.0253);color:#fff;">Accessibility: Investigate</span>
<i style="left:2445px;top:1719px;width:60px;height:32px;background:#2b2b2b;"></i>
<span class="u" style="left:2839.22px;top:1727px;font-size:15.6px;line-height:17px;transform:scaleX(1.0102);color:#f0f0f0;">140%</span>
<i style="left:2216px;top:1680.5px;width:644px;height:25.5px;background:#151515;border-radius:13px;"></i>
<i style="left:2241.8px;top:1687.2px;width:55.6px;height:12px;background:#9d9d9d;border-radius:6px;"></i>
<i style="left:2864px;top:281px;width:25px;height:1393px;background:#141414;border-radius:12px;"></i>
<i style="left:2870px;top:305.4px;width:12.4px;height:1309px;background:#9d9d9d;border-radius:6px;"></i>
<svg style="left:0;top:0" width="2902" height="1762" viewBox="0 0 2902 1762" fill="none" stroke-linecap="round" stroke-linejoin="round">
<rect x="38.2" y="34.8" width="19.7" height="24.2" rx="2.4" fill="#217a30"/>
<path d="M38.2 37.2a2.4 2.4 0 0 1 2.4-2.4H47.2V43.6H38.2z" fill="#6bd655"/>
<path d="M47.2 34.8h8.3a2.4 2.4 0 0 1 2.4 2.4V43.6H47.2z" fill="#b4e66a"/>
<rect x="35" y="43" width="13" height="12.8" rx="2.2" fill="#0e6a3c"/>
<path d="M38.6 45.6L44.6 52.6M44.6 45.6L38.6 52.6" stroke="#fff" stroke-width="2" fill="none"/>
<path d="M357 43.9L364 52.1L371 43.9" stroke="#fff" stroke-width="1.8" fill="none"/>
<circle cx="2488.4" cy="44.3" r="7.6" stroke="#fff" stroke-width="1.7" fill="none"/>
<path d="M2483 50L2476 57.6" stroke="#fff" stroke-width="1.8" fill="none"/>
<defs><clipPath id="av"><circle cx="2571" cy="46.9" r="18"/></clipPath><linearGradient id="sky" x1="0" y1="0" x2="0" y2="1"><stop offset="0" stop-color="#a9bedc"/><stop offset="0.45" stop-color="#c3dfe6"/><stop offset="1" stop-color="#9fc0c4"/></linearGradient></defs>
<g clip-path="url(#av)" stroke="none"><rect x="2553" y="28" width="36" height="38" fill="url(#sky)"/><ellipse cx="2571.5" cy="64" rx="15" ry="8" fill="#e9e2d6"/><ellipse cx="2571.5" cy="48" rx="7.8" ry="10.5" fill="#c99a80"/><ellipse cx="2571.5" cy="41" rx="7.2" ry="5" fill="#d3aa92"/><rect x="2568" y="55" width="7" height="6" fill="#b98a72"/></g>
<path d="M2634.5 35.5H2647.5L2653 43.2L2641 57L2629 43.2ZM2629 43.2H2653M2636.6 43.2L2641 56.5L2645.4 43.2M2634.5 35.5L2636.6 43.2L2641 35.5L2645.4 43.2L2647.5 35.5" stroke="#fff" stroke-width="1.5" fill="none"/>
<path d="M2703.5 46.3H2719" stroke="#fff" stroke-width="1.6" fill="none"/>
<rect x="2775.6" y="42.8" width="11.8" height="11.8" rx="2.6" stroke="#fff" stroke-width="1.6" fill="none"/>
<path d="M2779.5 39.6H2787.2a3.4 3.4 0 0 1 3.4 3.4V50.6" stroke="#fff" stroke-width="1.6" fill="none"/>
<path d="M2847.5 39.8L2863 55.2M2863 39.8L2847.5 55.2" stroke="#fff" stroke-width="1.7" fill="none"/>
<path d="M2629.5 97.8H2644.5V109.2H2636L2631.2 112.8V109.2H2629.5Z" stroke="#fff" stroke-width="1.5" fill="none"/>
<path d="M2776 103.5V112.6H2788.5V109.5M2780 107.5C2780.6 103.4 2783.3 101.4 2786.5 101.2V98L2791.6 102.7L2786.5 107.4V104.3C2783.8 104.2 2781.8 105.2 2780 107.5Z" stroke="#0a0a0a" stroke-width="1.5" fill="none"/>
<path d="M2858.7 103.55L2862.2 107.45L2865.7 103.55" stroke="#0a0a0a" stroke-width="1.9" fill="none"/>
<path d="M2850.2 253.4L2857.2 261.8L2864.2 253.4" stroke="#fff" stroke-width="1.7" fill="none"/>
<path d="M62.5 148.7H57V182H74.5M80.5 148.7H86V158.5" stroke="#eaa53d" stroke-width="3.2" fill="none" stroke-linejoin="miter" stroke-linecap="butt"/>
<path d="M63.5 151.5V146.6H67.2C67.2 140.6 76 140.6 76 146.6H79.6V151.5Z" stroke="#b9b9b9" stroke-width="1.5" fill="none"/>
<rect x="76.3" y="160.4" width="18.6" height="24.6" rx="0" stroke="#dedede" stroke-width="1.7" fill="none"/>
<path d="M67.8 224.7L71.4 228.7L75 224.7" stroke="#fff" stroke-width="1.9" fill="none"/>
<path d="M119.3 140.6L128.6 158M130.6 140.6L121.2 158" stroke="#dcdcdc" stroke-width="1.4" fill="none"/>
<circle cx="119.6" cy="161.2" r="2.9" stroke="#3b9be0" stroke-width="1.6" fill="none"/>
<circle cx="129.9" cy="161.2" r="2.9" stroke="#3b9be0" stroke-width="1.6" fill="none"/>
<path d="M121.5 199.8H113V180H121.5L124 182.5" stroke="#dcdcdc" stroke-width="1.5" fill="none"/>
<path d="M122.3 185H130.2L135 189.8V202.2H122.3ZM130.2 185V189.8H135M125.3 194.3H132M125.3 197.8H132" stroke="#dcdcdc" stroke-width="1.5" fill="none"/>
<path d="M211.9 189.3L215.5 193.3L219.1 189.3" stroke="#fff" stroke-width="1.9" fill="none"/>
<path d="M113.3 229L127.5 222.6L132.6 231.2L121.8 239.2Z" stroke="#eaa53d" stroke-width="1.5" fill="none"/>
<path d="M116.5 232.4L123.8 235.6L121.8 239.2Z" stroke="#eaa53d" stroke-width="1.2" fill="#eaa53d"/>
<path d="M124 222.5L127 219.8L131.3 226.2L129.4 227.8M128.6 221.5L133.6 218.4L135.3 221.2L130.3 224.4" stroke="#dcdcdc" stroke-width="1.5" fill="none"/>
<path d="M265.7 268V257.8H275.9" stroke="#f0f0f0" stroke-width="1.8" fill="none" stroke-linecap="butt" stroke-linejoin="miter"/>
<path d="M269.9 262L276.1 268.2M271.3 268.4H276.3V263.4" stroke="#f0f0f0" stroke-width="1.8" fill="none" stroke-linecap="butt" stroke-linejoin="miter"/>
<path d="M463.7 162.4L467.3 166.4L470.9 162.4" stroke="#fff" stroke-width="1.9" fill="none"/>
<path d="M531.8 162.4L535.4 166.4L539 162.4" stroke="#fff" stroke-width="1.9" fill="none"/>
<path d="M570.6 156.7L573.8 153.1L577 156.7" stroke="#3b9be0" stroke-width="1.7" fill="none"/>
<path d="M608.8 154.8L612 158.4L615.2 154.8" stroke="#3b9be0" stroke-width="1.7" fill="none"/>
<path d="M415.5 210.6L419.1 214.6L422.7 210.6" stroke="#fff" stroke-width="1.9" fill="none"/>
<path d="M480.7 210.6L484.3 214.6L487.9 210.6" stroke="#fff" stroke-width="1.9" fill="none"/>
<path d="M545.8 210.6L549.4 214.6L553 210.6" stroke="#fff" stroke-width="1.9" fill="none"/>
<path d="M606.6 210.6L610.2 214.6L613.8 210.6" stroke="#fff" stroke-width="1.9" fill="none"/>
<path d="M444.5 200.6H466.3M444.5 211.2H466.3M444.5 200.6V221M455.4 200.6V221M466.3 200.6V221" stroke="#d8d8d8" stroke-width="1.6" stroke-dasharray="1.6 2" stroke-linecap="butt" fill="none"/>
<path d="M443.8 222.2H466.9" stroke="#d8d8d8" stroke-width="1.8" fill="none" stroke-linecap="butt"/>
<path d="M519.2 200.6L513.2 207.5L520.8 216.4L528.6 208.6L523.5 202.5V206" stroke="#d8d8d8" stroke-width="1.5" fill="none"/>
<path d="M528 206.2C530.2 208 530.4 211 529.6 213.6" stroke="#3b9be0" stroke-width="2.2" fill="none"/>
<path d="M616.8 268V257.8H627" stroke="#f0f0f0" stroke-width="1.8" fill="none" stroke-linecap="butt" stroke-linejoin="miter"/>
<path d="M621 262L627.2 268.2M622.4 268.4H627.4V263.4" stroke="#f0f0f0" stroke-width="1.8" fill="none" stroke-linecap="butt" stroke-linejoin="miter"/>
<path d="M653.1 152.9H675.1" stroke="#d8d8d8" stroke-width="2" fill="none" stroke-linecap="butt"/>
<path d="M656.1 159H672.1" stroke="#d8d8d8" stroke-width="2" fill="none" stroke-linecap="butt"/>
<path d="M653.1 165H675.1" stroke="#d8d8d8" stroke-width="2" fill="none" stroke-linecap="butt"/>
<path d="M692.1 157.1H714.1" stroke="#d8d8d8" stroke-width="2" fill="none" stroke-linecap="butt"/>
<path d="M695.1 163.2H711.1" stroke="#d8d8d8" stroke-width="2" fill="none" stroke-linecap="butt"/>
<path d="M692.1 169.3H714.1" stroke="#d8d8d8" stroke-width="2" fill="none" stroke-linecap="butt"/>
<path d="M731.1 163.2H753.1" stroke="#d8d8d8" stroke-width="2" fill="none" stroke-linecap="butt"/>
<path d="M734.1 169.3H750.1" stroke="#d8d8d8" stroke-width="2" fill="none" stroke-linecap="butt"/>
<path d="M731.1 175.4H753.1" stroke="#d8d8d8" stroke-width="2" fill="none" stroke-linecap="butt"/>
<path d="M653.1 202.2H675.1" stroke="#d8d8d8" stroke-width="2" fill="none" stroke-linecap="butt"/>
<path d="M692.1 202.2H714.1" stroke="#d8d8d8" stroke-width="2" fill="none" stroke-linecap="butt"/>
<path d="M731.1 202.2H753.1" stroke="#d8d8d8" stroke-width="2" fill="none" stroke-linecap="butt"/>
<path d="M774.3 202.2H796.2" stroke="#d8d8d8" stroke-width="2" fill="none" stroke-linecap="butt"/>
<path d="M813.3 202.2H835.2" stroke="#d8d8d8" stroke-width="2" fill="none" stroke-linecap="butt"/>
<path d="M653.1 208.3H669.1" stroke="#d8d8d8" stroke-width="2" fill="none" stroke-linecap="butt"/>
<path d="M695.1 208.3H711.1" stroke="#d8d8d8" stroke-width="2" fill="none" stroke-linecap="butt"/>
<path d="M737.1 208.3H753.1" stroke="#d8d8d8" stroke-width="2" fill="none" stroke-linecap="butt"/>
<path d="M787 208.3H796.2" stroke="#d8d8d8" stroke-width="2" fill="none" stroke-linecap="butt"/>
<path d="M826 208.3H835.2" stroke="#d8d8d8" stroke-width="2" fill="none" stroke-linecap="butt"/>
<path d="M653.1 214.4H675.1" stroke="#d8d8d8" stroke-width="2" fill="none" stroke-linecap="butt"/>
<path d="M692.1 214.4H714.1" stroke="#d8d8d8" stroke-width="2" fill="none" stroke-linecap="butt"/>
<path d="M731.1 214.4H753.1" stroke="#d8d8d8" stroke-width="2" fill="none" stroke-linecap="butt"/>
<path d="M787 214.4H796.2" stroke="#d8d8d8" stroke-width="2" fill="none" stroke-linecap="butt"/>
<path d="M826 214.4H835.2" stroke="#d8d8d8" stroke-width="2" fill="none" stroke-linecap="butt"/>
<path d="M653.1 220.2H669.1" stroke="#d8d8d8" stroke-width="2" fill="none" stroke-linecap="butt"/>
<path d="M695.1 220.2H711.1" stroke="#d8d8d8" stroke-width="2" fill="none" stroke-linecap="butt"/>
<path d="M737.1 220.2H753.1" stroke="#d8d8d8" stroke-width="2" fill="none" stroke-linecap="butt"/>
<path d="M774.3 220.2H796.2" stroke="#d8d8d8" stroke-width="2" fill="none" stroke-linecap="butt"/>
<path d="M813.3 220.2H835.2" stroke="#d8d8d8" stroke-width="2" fill="none" stroke-linecap="butt"/>
<path d="M784.5 211.3H775.2M778.6 207.6L774.9 211.3L778.6 215" stroke="#3b9be0" stroke-width="1.9" fill="none"/>
<path d="M813.6 211.3H822.8M819.4 207.6L823.1 211.3L819.4 215" stroke="#3b9be0" stroke-width="1.9" fill="none"/>
<text x="0" y="0" transform="translate(778.5 166.5) rotate(-45)" font-family="Liberation Sans,sans-serif" font-size="14.5" fill="#d8d8d8" stroke="none">ab</text>
<path d="M781.5 173.6L796.5 158.8M789.6 158.4H796.8V165.6" stroke="#3b9be0" stroke-width="1.8" fill="none"/>
<path d="M806.9 162.4L810.5 166.4L814.1 162.4" stroke="#fff" stroke-width="1.9" fill="none"/>
<text x="870.4" y="163" font-family="Liberation Sans,sans-serif" font-size="15.4" fill="#d8d8d8" stroke="none">ab</text>
<text x="870.6" y="174.4" font-family="Liberation Sans,sans-serif" font-size="15.4" fill="#d8d8d8" stroke="none">c</text>
<path d="M890.6 164.6C891.4 169 888 170.6 880.6 170.4M884.4 166.6L880 170.4L884.6 174.6" stroke="#3b9be0" stroke-width="1.9" fill="none"/>
<rect x="867.8" y="200.9" width="21.4" height="21.2" rx="0" stroke="#d8d8d8" stroke-width="1.6" fill="none"/>
<rect x="867.8" y="205.2" width="21.6" height="12.2" fill="#1c3d5a" stroke="#3b9be0" stroke-width="1.7"/>
<path d="M878.5 201V204.5M878.5 218.2V222" stroke="#d8d8d8" stroke-width="1.4" fill="none"/>
<path d="M871.5 211.4H885.5M874.3 208.4L871.2 211.4L874.3 214.4M882.7 208.4L885.8 211.4L882.7 214.4" stroke="#4aa6ea" stroke-width="1.7" fill="none"/>
<path d="M1050.8 210.6L1054.4 214.6L1058 210.6" stroke="#fff" stroke-width="1.9" fill="none"/>
<path d="M1066.7 268V257.8H1076.9" stroke="#f0f0f0" stroke-width="1.8" fill="none" stroke-linecap="butt" stroke-linejoin="miter"/>
<path d="M1070.9 262L1077.1 268.2M1072.3 268.4H1077.3V263.4" stroke="#f0f0f0" stroke-width="1.8" fill="none" stroke-linecap="butt" stroke-linejoin="miter"/>
<path d="M1301.6 162.4L1305.2 166.4L1308.8 162.4" stroke="#fff" stroke-width="1.9" fill="none"/>
<path d="M1138.8 210.6L1142.4 214.6L1146 210.6" stroke="#fff" stroke-width="1.9" fill="none"/>
<g font-family="Liberation Sans,sans-serif" font-size="13.4" fill="#d8d8d8" stroke="none"><text x="1260.4" y="210.4">0</text><text x="1249" y="222.6">.00</text><text x="1288" y="210.4">.00</text><text x="1295.5" y="222.6">.0</text></g>
<path d="M1258.5 206.4H1245.6M1249.6 202.4L1245.3 206.4L1249.6 210.4" stroke="#3b9be0" stroke-width="1.8" fill="none"/>
<path d="M1284.4 218.4H1296.8M1293 214.4L1297.2 218.4L1293 222.4" stroke="#3b9be0" stroke-width="1.8" fill="none"/>
<path d="M1308.7 268V257.8H1318.9" stroke="#f0f0f0" stroke-width="1.8" fill="none" stroke-linecap="butt" stroke-linejoin="miter"/>
<path d="M1312.9 262L1319.1 268.2M1314.3 268.4H1319.3V263.4" stroke="#f0f0f0" stroke-width="1.8" fill="none" stroke-linecap="butt" stroke-linejoin="miter"/>
<rect x="1348.9" y="146" width="40.4" height="32" rx="0" stroke="#d8d8d8" stroke-width="1.6" fill="none"/>
<path d="M1362.37 146V178" stroke="#d8d8d8" stroke-width="1.4" fill="none"/>
<path d="M1375.83 146V178" stroke="#d8d8d8" stroke-width="1.4" fill="none"/>
<rect x="1356" y="156.2" width="37" height="11.8" fill="#1f78d1" stroke="none"/>
<path d="M1376.5 156.2V168" stroke="#8cc8ff" stroke-width="1.2" fill="none"/>
<path d="M1365 162H1346.4M1355.6 152L1345.8 162L1355.6 172" stroke="#62a8e6" stroke-width="1.7" fill="none"/>
<path d="M1364.7 224.7L1368.3 228.7L1371.9 224.7" stroke="#fff" stroke-width="1.9" fill="none"/>
<rect x="1414" y="146" width="40.4" height="32" rx="0" stroke="#d8d8d8" stroke-width="1.6" fill="none"/>
<path d="M1427.47 146V178" stroke="#d8d8d8" stroke-width="1.4" fill="none"/>
<path d="M1440.93 146V178" stroke="#d8d8d8" stroke-width="1.4" fill="none"/>
<rect x="1412" y="156.2" width="9" height="11.8" fill="#292929" stroke="none"/>
<path d="M1420 156.2H1437L1444 162L1437 168H1420Z" fill="#1f78d1" stroke="none"/>
<path d="M1432.5 156.2V168" stroke="#8cc8ff" stroke-width="1.2" fill="none"/>
<path d="M1440.6 154.4L1456.6 171.4M1456.6 154.4L1440.6 171.4" stroke="#e05b55" stroke-width="1.7" fill="none"/>
<path d="M1429.7 224.7L1433.3 228.7L1436.9 224.7" stroke="#fff" stroke-width="1.9" fill="none"/>
<rect x="1480.1" y="146" width="40.2" height="32" rx="0" stroke="#d8d8d8" stroke-width="1.6" fill="none"/>
<path d="M1490.3 146V178M1510.6 146V178M1480 156.2H1520.4M1480 167.8H1520.4" stroke="#d8d8d8" stroke-width="1.4" fill="none"/>
<rect x="1491" y="157" width="19" height="10" fill="#1f78d1" stroke="none"/>
<path d="M1488.6 140.4H1511.6M1488.6 137.8V143M1511.6 137.8V143" stroke="#3b9be0" stroke-width="1.5" fill="none"/>
<path d="M1495.8 222.6L1499.4 226.6L1503 222.6" stroke="#fff" stroke-width="1.9" fill="none"/>
<path d="M1583.4 144.6V142H1567.2L1576.4 152L1567.2 162H1583.4V159.4" stroke="#d8d8d8" stroke-width="1.5" fill="none" stroke-linejoin="miter"/>
<path d="M1695.7 150.4L1699.3 154.4L1702.9 150.4" stroke="#fff" stroke-width="1.9" fill="none"/>
<path d="M1620.8 188.5L1624.4 192.5L1628 188.5" stroke="#fff" stroke-width="1.9" fill="none"/>
<path d="M1638.8 227.4L1642.4 231.4L1646 227.4" stroke="#fff" stroke-width="1.9" fill="none"/>
<rect x="1564" y="181.1" width="22.2" height="19.8" rx="0" stroke="#d8d8d8" stroke-width="1.6" fill="none"/>
<path d="M1564 184.6H1586.2" stroke="#d8d8d8" stroke-width="1.2" fill="none"/>
<path d="M1574.6 186.6V196.8M1570.2 192.8L1574.6 197.2L1579 192.8" stroke="#3b9be0" stroke-width="1.8" fill="none"/>
<path d="M1577.6 219.6L1585.8 227.4L1572 240.4L1564 232.4Z" stroke="#c879d6" stroke-width="1.6" fill="none"/>
<path d="M1569 227.6L1577 235.6L1572 240.4L1564 232.4Z" fill="#b44fc6" stroke="none"/>
<text x="1729.6" y="159.6" font-family="Liberation Sans,sans-serif" font-size="23" fill="#3b9be0" stroke="none" textLength="15">A</text>
<path d="M1730.6 163.6H1742.4L1730.6 181H1743" stroke="#d8d8d8" stroke-width="1.5" fill="none"/>
<path d="M1749 152H1771.4L1763.2 162.4V174.8H1757.4V162.4Z" stroke="#d8d8d8" stroke-width="1.5" fill="none"/>
<path d="M1768.9 222.8L1772.5 226.8L1776.1 222.8" stroke="#fff" stroke-width="1.9" fill="none"/>
<path d="M1842.6 222.8L1846.2 226.8L1849.8 222.8" stroke="#fff" stroke-width="1.9" fill="none"/>
<circle cx="1826.2" cy="156.9" r="15.2" stroke="#d8d8d8" stroke-width="1.6" fill="none"/>
<path d="M1815 168.2L1799 184" stroke="#d8d8d8" stroke-width="1.7" fill="none"/>
<rect x="1895.8" y="141.6" width="41.2" height="41" rx="0" stroke="#d0501e" stroke-width="1.7" fill="none"/>
<rect x="1900.6" y="146.6" width="13.6" height="13.2" rx="0" stroke="#d0501e" stroke-width="1.6" fill="none"/>
<rect x="1900.6" y="164.8" width="13.6" height="13.2" rx="0" stroke="#d0501e" stroke-width="1.6" fill="none"/>
<rect x="1918.6" y="146.6" width="13.6" height="13.2" rx="0" stroke="#d0501e" stroke-width="1.6" fill="none"/>
<rect x="1918.6" y="164.8" width="13.6" height="13.2" rx="0" stroke="#d0501e" stroke-width="1.6" fill="none"/>
<rect x="1989.8" y="141.8" width="40.6" height="40.6" rx="0" stroke="#d8d8d8" stroke-width="1.6" fill="none"/>
<rect x="1990.5" y="142.5" width="39" height="4.5" fill="#8a8a8a" stroke="none"/>
<path d="M1989.8 147.4H2030.4M1989.8 159.6H1996M2024 159.6H2030.4M1989.8 170.4H2000M2020 170.4H2030.4M2003.4 173V182M2016.8 173V182" stroke="#bdbdbd" stroke-width="1.4" fill="none"/>
<circle cx="2008.4" cy="159" r="12.6" fill="#292929" stroke="#d8d8d8" stroke-width="1.6"/>
<rect x="2001.6" y="156.6" width="3.6" height="7.6" fill="#9a9a9a" stroke="none"/><rect x="2006.4" y="151.6" width="3.6" height="12.6" fill="#292929" stroke="#d8d8d8" stroke-width="1"/><rect x="2011.6" y="154.4" width="3.6" height="9.8" fill="#2b88d8" stroke="none"/>
<path d="M2017.6 168.4L2030.4 182.4" stroke="#d8d8d8" stroke-width="1.8" fill="none"/>
<circle cx="2431.4" cy="180.7" r="13.1" stroke="#fff" stroke-width="9.6" fill="none"/>
<rect x="2425.2" y="160" width="12.6" height="23.2" rx="6.3" fill="#292929" stroke="none"/>
<rect x="2427" y="154.8" width="8.9" height="26.6" rx="4.45" fill="#fff" stroke="none"/>
<path d="M54.6 1685.6L47 1693L54.6 1700.4" stroke="#8a8a8a" stroke-width="1.7" fill="none"/>
<path d="M96 1685.6L103.6 1693L96 1700.4" stroke="#d0d0d0" stroke-width="1.7" fill="none"/>
<circle cx="2089.4" cy="1692.7" r="2.3" stroke="none" stroke-width="0" fill="#e6e6e6"/>
<circle cx="2095.4" cy="1692.7" r="2.3" stroke="none" stroke-width="0" fill="#e6e6e6"/>
<circle cx="2101.4" cy="1692.7" r="2.3" stroke="none" stroke-width="0" fill="#e6e6e6"/>
<path d="M2135.4 1692.8H2151.6M2143.5 1684.6V1701" stroke="#e6e6e6" stroke-width="1.6" fill="none"/>
<rect x="2190.4" y="1687.8" width="3" height="3" fill="#e6e6e6" stroke="none"/>
<rect x="2190.4" y="1693.3999999999999" width="3" height="3" fill="#e6e6e6" stroke="none"/>
<rect x="2190.4" y="1699.0" width="3" height="3" fill="#e6e6e6" stroke="none"/>
<path d="M2224.4 1693L2233.4 1686.6V1699.4Z" fill="#9d9d9d" stroke="none"/>
<path d="M2853.6 1693L2842.8 1686.4V1699.6Z" fill="#9d9d9d" stroke="none"/>
<path d="M2876.4 287.6L2883 295H2869.8Z" fill="#9d9d9d" stroke="#9d9d9d" stroke-width="1.5"/>
<path d="M2876.4 1662.6L2883 1654.6H2869.8Z" fill="#9d9d9d" stroke="#9d9d9d" stroke-width="1.5"/>
<rect x="99.8" y="1725.6" width="20.6" height="16" rx="0" stroke="#e6e6e6" stroke-width="1.5" fill="none"/>
<path d="M99.8 1729.4H120.4M103 1733.4H108M103 1737.4H107" stroke="#e6e6e6" stroke-width="1.4" fill="none"/>
<circle cx="114.4" cy="1737.6" r="5.6" fill="#141414" stroke="#e6e6e6" stroke-width="1.5"/><circle cx="114.4" cy="1737.6" r="2.4" fill="#e6e6e6" stroke="none"/>
<circle cx="155.6" cy="1726.6" r="2.4" stroke="#e6e6e6" stroke-width="1.4" fill="none"/>
<path d="M147 1730.6C152 1733.4 159 1733.4 164.6 1730.6M153 1732.6L152 1738.6L148.6 1744M158.4 1732.6L159 1736.4M153.4 1739L155.8 1735.4" stroke="#e6e6e6" stroke-width="1.5" fill="none"/>
<path d="M158.6 1738L166.4 1745.6M166.4 1738L158.6 1745.6" stroke="#e6e6e6" stroke-width="1.5" fill="none"/>
<rect x="2465.2" y="1724.4" width="18.6" height="18.4" rx="0" stroke="#e6e6e6" stroke-width="1.6" fill="none"/>
<path d="M2471.4 1724.4V1742.8M2477.6 1724.4V1742.8M2465.2 1730.6H2483.8M2465.2 1736.8H2483.8" stroke="#e6e6e6" stroke-width="1.4" fill="none"/>
<rect x="2525" y="1724.4" width="20" height="18.4" rx="0" stroke="#e6e6e6" stroke-width="1.6" fill="none"/>
<rect x="2529.6" y="1728.6" width="10.8" height="10.4" rx="0" stroke="#e6e6e6" stroke-width="1.4" fill="none"/>
<path d="M2532.4 1732H2537.6M2532.4 1735.4H2537.6" stroke="#e6e6e6" stroke-width="1.2" fill="none"/>
<rect x="2584.8" y="1724.4" width="20" height="18.4" rx="0" stroke="#e6e6e6" stroke-width="1.6" fill="none"/>
<path d="M2591 1724.4V1734.4H2599V1724.4M2584.8 1734.4H2604.8" stroke="#e6e6e6" stroke-width="1.5" fill="none"/>
<path d="M2633.2 1734.3H2643.8" stroke="#e6e6e6" stroke-width="1.4" fill="none"/>
<path d="M2653.4 1734.3H2800" stroke="#b8b8b8" stroke-width="1.4" fill="none"/>
<path d="M2727 1729.4V1739.2" stroke="#b8b8b8" stroke-width="1.4" fill="none"/>
<rect x="2732.8" y="1726" width="7.6" height="16.8" rx="1.6" fill="#c8c8c8" stroke="none"/>
<path d="M2809.2 1734.3H2820M2814.6 1729V1739.6" stroke="#e6e6e6" stroke-width="1.4" fill="none"/>
</svg>
</div>
</body></html>
